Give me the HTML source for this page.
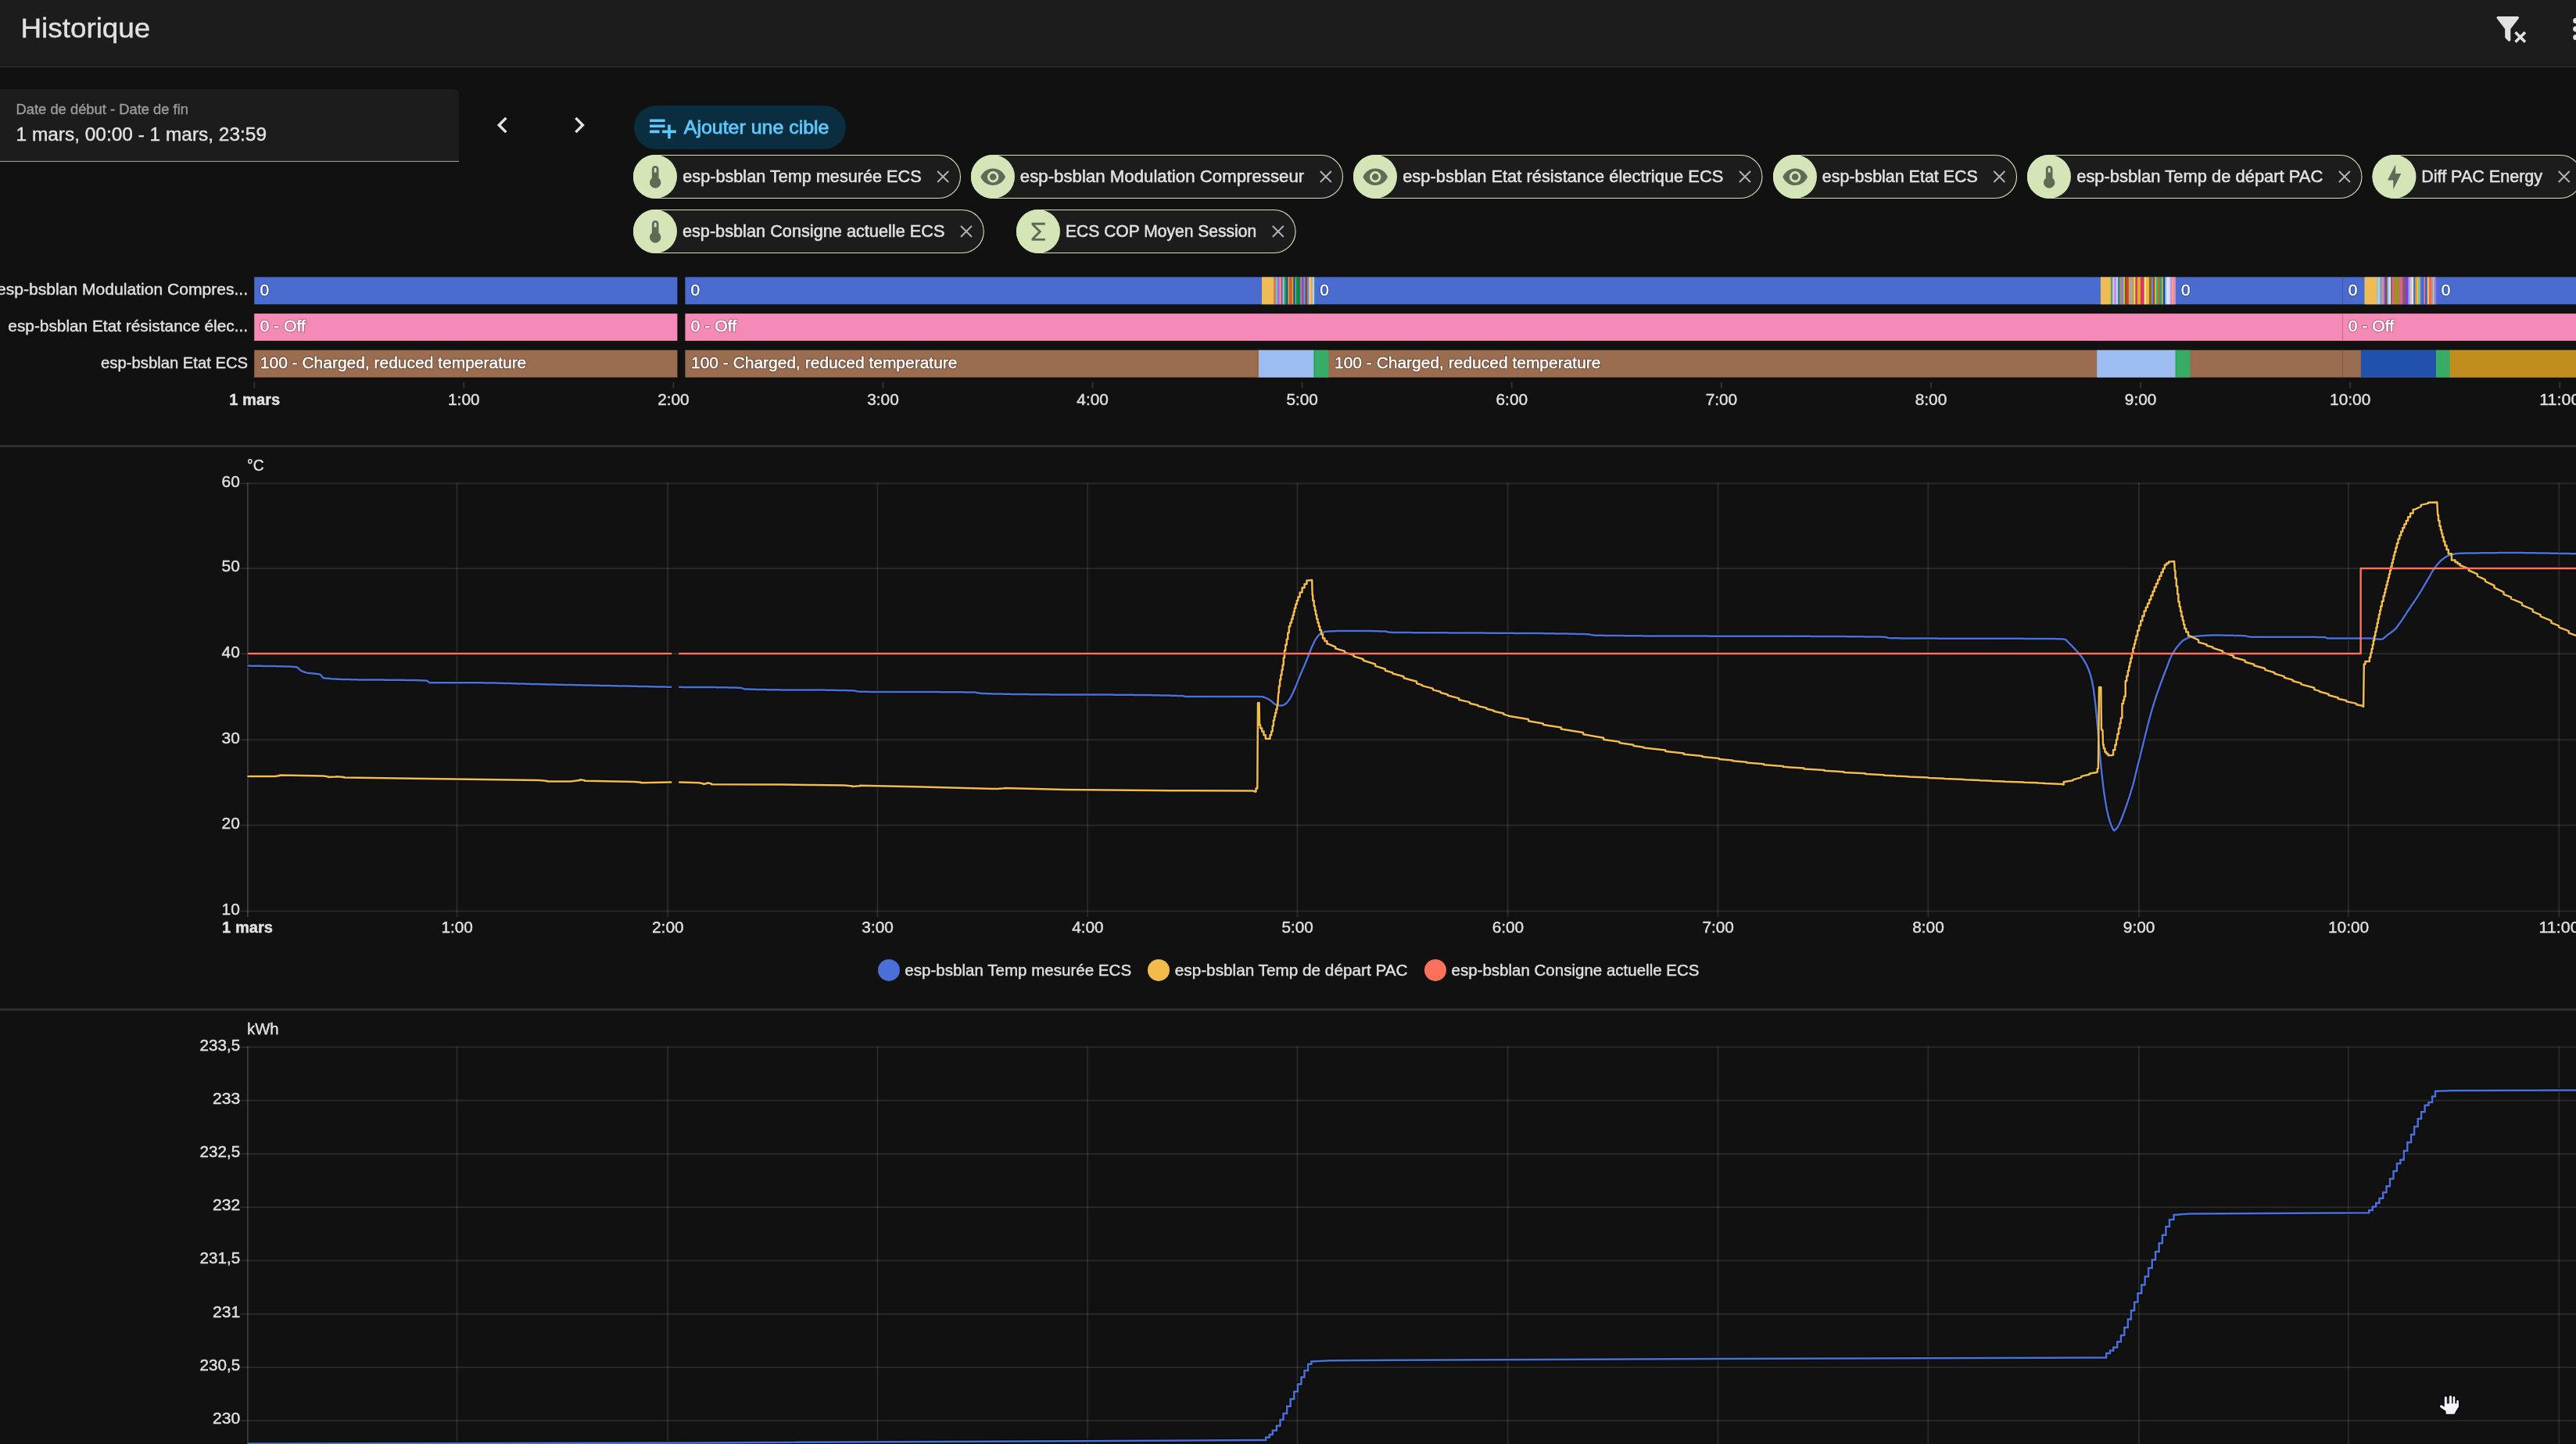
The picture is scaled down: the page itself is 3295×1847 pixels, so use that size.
<!DOCTYPE html>
<html lang="fr"><head><meta charset="utf-8"><title>Historique</title>
<style>
html,body{margin:0;padding:0;background:#111111;overflow:hidden;}
body{width:3295px;height:1847px;overflow:hidden;position:relative;font-family:"Liberation Sans", sans-serif;}
svg{position:absolute;left:0;top:0;display:block;will-change:transform}
text{font-family:"Liberation Sans", sans-serif;}
</style></head><body>
<svg width="3295" height="1847" viewBox="0 0 3295 1847">
<rect x="0" y="0" width="3295" height="85.5" fill="#1c1c1c"/>
<rect x="0" y="84.8" width="3295" height="1.4" fill="#303030"/>
<text x="26.4" y="48.0" font-size="34.7" fill="#e1e1e1" text-anchor="start" font-weight="normal" textLength="166.0" lengthAdjust="spacingAndGlyphs" stroke="#e1e1e1" stroke-width="0.4">Historique</text>
<path transform="translate(3190.00,15.60) scale(1.775)" d="M14.76,20.83L17.6,18L14.76,15.17L16.17,13.76L19,16.57L21.83,13.76L23.24,15.17L20.43,18L23.24,20.83L21.83,22.24L19,19.4L16.17,22.24L14.76,20.83M12,12V19.88C12.04,20.18 11.94,20.5 11.71,20.71C11.32,21.1 10.69,21.1 10.3,20.71L8.29,18.7C8.06,18.47 7.96,18.16 8,17.87V12H7.97L2.21,4.62C1.87,4.19 1.95,3.56 2.38,3.22C2.57,3.08 2.78,3 3,3V3H17V3C17.22,3 17.43,3.08 17.62,3.22C18.05,3.56 18.13,4.19 17.79,4.62L12.03,12H12Z" fill="#e1e1e1"/>
<path transform="translate(3273.40,15.80) scale(1.775)" d="M12,16A2,2 0 0,1 14,18A2,2 0 0,1 12,20A2,2 0 0,1 10,18A2,2 0 0,1 12,16M12,10A2,2 0 0,1 14,12A2,2 0 0,1 12,14A2,2 0 0,1 10,12A2,2 0 0,1 12,10M12,4A2,2 0 0,1 14,6A2,2 0 0,1 12,8A2,2 0 0,1 10,6A2,2 0 0,1 12,4Z" fill="#e1e1e1"/>
<path d="M0 114 H580 Q587 114 587 121 V206 H0 Z" fill="#1c1c1c"/>
<rect x="0" y="205.9" width="587" height="1.1" fill="#9a9a9a"/>
<text x="20.5" y="145.5" font-size="18.4" fill="#9b9b9b" text-anchor="start" font-weight="normal" textLength="220.5" lengthAdjust="spacingAndGlyphs" stroke="#9b9b9b" stroke-width="0.4">Date de début - Date de fin</text>
<text x="20.5" y="179.5" font-size="23.7" fill="#e1e1e1" text-anchor="start" font-weight="normal" textLength="320.5" lengthAdjust="spacingAndGlyphs" stroke="#e1e1e1" stroke-width="0.4">1 mars, 00:00 - 1 mars, 23:59</text>
<path transform="translate(622.08,139.36) scale(1.72)" d="M15.41,16.58L10.83,12L15.41,7.41L14,6L8,12L14,18L15.41,16.58Z" fill="#e1e1e1"/>
<path transform="translate(720.34,139.36) scale(1.72)" d="M8.59,16.58L13.17,12L8.59,7.41L10,6L16,12L10,18L8.59,16.58Z" fill="#e1e1e1"/>
<rect x="811" y="135" width="271" height="56" rx="28" fill="#0b2d40"/>
<path transform="translate(825.70,141.70) scale(1.78)" d="M3 16H10V14H3M18 14V10H16V14H12V16H16V20H18V16H22V14M14 6H3V8H14M14 10H3V12H14V10Z" fill="#5cc8fb"/>
<text x="874.8" y="171.3" font-size="23.8" fill="#5cc8fb" text-anchor="start" font-weight="normal" textLength="185.7" lengthAdjust="spacingAndGlyphs" stroke="#5cc8fb" stroke-width="0.8">Ajouter une cible</text>
<rect x="810.5" y="198.5" width="418.0" height="55" rx="27.5" fill="#1c1c1c" stroke="#d4e5b8" stroke-width="1.1"/>
<circle cx="838.0" cy="226.0" r="28" fill="#d4e5b8"/>
<path transform="translate(820.92,209.02) scale(1.44)" d="M15 13V5A3 3 0 0 0 9 5V13A5 5 0 1 0 15 13M12 4A1 1 0 0 1 13 5V8H11V5A1 1 0 0 1 12 4Z" fill="#5f6b55"/>
<text x="873.3" y="232.6" font-size="21.2" fill="#e1e1e1" text-anchor="start" font-weight="normal" textLength="305.3" lengthAdjust="spacingAndGlyphs" stroke="#e1e1e1" stroke-width="0.5">esp-bsblan Temp mesurée ECS</text>
<path d="M1199.2 219.0 L1213.2 233.0 M1213.2 219.0 L1199.2 233.0" stroke="#b4b4b4" stroke-width="1.9" fill="none"/>
<rect x="1242.5" y="198.5" width="475.0" height="55" rx="27.5" fill="#1c1c1c" stroke="#d4e5b8" stroke-width="1.1"/>
<circle cx="1270.0" cy="226.0" r="28" fill="#d4e5b8"/>
<path transform="translate(1252.92,209.02) scale(1.44)" d="M12,9A3,3 0 0,0 9,12A3,3 0 0,0 12,15A3,3 0 0,0 15,12A3,3 0 0,0 12,9M12,17A5,5 0 0,1 7,12A5,5 0 0,1 12,7A5,5 0 0,1 17,12A5,5 0 0,1 12,17M12,4.5C7,4.5 2.73,7.61 1,12C2.73,16.39 7,19.5 12,19.5C17,19.5 21.27,16.39 23,12C21.27,7.61 17,4.5 12,4.5Z" fill="#5f6b55"/>
<text x="1304.8" y="232.6" font-size="21.2" fill="#e1e1e1" text-anchor="start" font-weight="normal" textLength="363.4" lengthAdjust="spacingAndGlyphs" stroke="#e1e1e1" stroke-width="0.5">esp-bsblan Modulation Compresseur</text>
<path d="M1688.8 219.0 L1702.8 233.0 M1702.8 219.0 L1688.8 233.0" stroke="#b4b4b4" stroke-width="1.9" fill="none"/>
<rect x="1731.5" y="198.5" width="522.5" height="55" rx="27.5" fill="#1c1c1c" stroke="#d4e5b8" stroke-width="1.1"/>
<circle cx="1759.0" cy="226.0" r="28" fill="#d4e5b8"/>
<path transform="translate(1741.92,209.02) scale(1.44)" d="M12,9A3,3 0 0,0 9,12A3,3 0 0,0 12,15A3,3 0 0,0 15,12A3,3 0 0,0 12,9M12,17A5,5 0 0,1 7,12A5,5 0 0,1 12,7A5,5 0 0,1 17,12A5,5 0 0,1 12,17M12,4.5C7,4.5 2.73,7.61 1,12C2.73,16.39 7,19.5 12,19.5C17,19.5 21.27,16.39 23,12C21.27,7.61 17,4.5 12,4.5Z" fill="#5f6b55"/>
<text x="1794.2" y="232.6" font-size="21.2" fill="#e1e1e1" text-anchor="start" font-weight="normal" textLength="410.2" lengthAdjust="spacingAndGlyphs" stroke="#e1e1e1" stroke-width="0.5">esp-bsblan Etat résistance électrique ECS</text>
<path d="M2225.0 219.0 L2239.0 233.0 M2239.0 219.0 L2225.0 233.0" stroke="#b4b4b4" stroke-width="1.9" fill="none"/>
<rect x="2268.5" y="198.5" width="311.0" height="55" rx="27.5" fill="#1c1c1c" stroke="#d4e5b8" stroke-width="1.1"/>
<circle cx="2296.0" cy="226.0" r="28" fill="#d4e5b8"/>
<path transform="translate(2278.92,209.02) scale(1.44)" d="M12,9A3,3 0 0,0 9,12A3,3 0 0,0 12,15A3,3 0 0,0 15,12A3,3 0 0,0 12,9M12,17A5,5 0 0,1 7,12A5,5 0 0,1 12,7A5,5 0 0,1 17,12A5,5 0 0,1 12,17M12,4.5C7,4.5 2.73,7.61 1,12C2.73,16.39 7,19.5 12,19.5C17,19.5 21.27,16.39 23,12C21.27,7.61 17,4.5 12,4.5Z" fill="#5f6b55"/>
<text x="2330.8" y="232.6" font-size="21.2" fill="#e1e1e1" text-anchor="start" font-weight="normal" textLength="199.0" lengthAdjust="spacingAndGlyphs" stroke="#e1e1e1" stroke-width="0.5">esp-bsblan Etat ECS</text>
<path d="M2550.4 219.0 L2564.4 233.0 M2564.4 219.0 L2550.4 233.0" stroke="#b4b4b4" stroke-width="1.9" fill="none"/>
<rect x="2593.5" y="198.5" width="427.5" height="55" rx="27.5" fill="#1c1c1c" stroke="#d4e5b8" stroke-width="1.1"/>
<circle cx="2621.0" cy="226.0" r="28" fill="#d4e5b8"/>
<path transform="translate(2603.92,209.02) scale(1.44)" d="M15 13V5A3 3 0 0 0 9 5V13A5 5 0 1 0 15 13M12 4A1 1 0 0 1 13 5V8H11V5A1 1 0 0 1 12 4Z" fill="#5f6b55"/>
<text x="2656.2" y="232.6" font-size="21.2" fill="#e1e1e1" text-anchor="start" font-weight="normal" textLength="315.1" lengthAdjust="spacingAndGlyphs" stroke="#e1e1e1" stroke-width="0.5">esp-bsblan Temp de départ PAC</text>
<path d="M2991.9 219.0 L3005.9 233.0 M3005.9 219.0 L2991.9 233.0" stroke="#b4b4b4" stroke-width="1.9" fill="none"/>
<rect x="3035.0" y="198.5" width="267.5" height="55" rx="27.5" fill="#1c1c1c" stroke="#d4e5b8" stroke-width="1.1"/>
<circle cx="3062.5" cy="226.0" r="28" fill="#d4e5b8"/>
<path transform="translate(3045.42,209.02) scale(1.44)" d="M11 15H6L13 1V9H18L11 23V15Z" fill="#5f6b55"/>
<text x="3097.2" y="232.6" font-size="21.2" fill="#e1e1e1" text-anchor="start" font-weight="normal" textLength="154.9" lengthAdjust="spacingAndGlyphs" stroke="#e1e1e1" stroke-width="0.5">Diff PAC Energy</text>
<path d="M3272.7 219.0 L3286.7 233.0 M3286.7 219.0 L3272.7 233.0" stroke="#b4b4b4" stroke-width="1.9" fill="none"/>
<rect x="810.5" y="268.5" width="447.8" height="55" rx="27.5" fill="#1c1c1c" stroke="#d4e5b8" stroke-width="1.1"/>
<circle cx="838.0" cy="296.0" r="28" fill="#d4e5b8"/>
<path transform="translate(820.92,279.02) scale(1.44)" d="M15 13V5A3 3 0 0 0 9 5V13A5 5 0 1 0 15 13M12 4A1 1 0 0 1 13 5V8H11V5A1 1 0 0 1 12 4Z" fill="#5f6b55"/>
<text x="872.9" y="302.6" font-size="21.2" fill="#e1e1e1" text-anchor="start" font-weight="normal" textLength="335.5" lengthAdjust="spacingAndGlyphs" stroke="#e1e1e1" stroke-width="0.5">esp-bsblan Consigne actuelle ECS</text>
<path d="M1229.0 289.0 L1243.0 303.0 M1243.0 289.0 L1229.0 303.0" stroke="#b4b4b4" stroke-width="1.9" fill="none"/>
<rect x="1300.5" y="268.5" width="356.6" height="55" rx="27.5" fill="#1c1c1c" stroke="#d4e5b8" stroke-width="1.1"/>
<circle cx="1328.0" cy="296.0" r="28" fill="#d4e5b8"/>
<path transform="translate(1310.92,279.02) scale(1.44)" d="M18,6H8.83L14.83,12L8.83,18H18V20H6V18L12,12L6,6V4H18V6Z" fill="#5f6b55"/>
<text x="1363.0" y="302.6" font-size="21.2" fill="#e1e1e1" text-anchor="start" font-weight="normal" textLength="244.2" lengthAdjust="spacingAndGlyphs" stroke="#e1e1e1" stroke-width="0.5">ECS COP Moyen Session</text>
<path d="M1627.8 289.0 L1641.8 303.0 M1641.8 289.0 L1627.8 303.0" stroke="#b4b4b4" stroke-width="1.9" fill="none"/>
<rect x="325.2" y="354.4" width="541.2" height="34.9" fill="#4a6cd0"/>
<rect x="876.4" y="354.4" width="2420.6" height="34.9" fill="#4a6cd0"/>
<rect x="325.2" y="401.1" width="541.2" height="34.8" fill="#f68ab6"/>
<rect x="876.4" y="401.1" width="2420.6" height="34.8" fill="#f68ab6"/>
<rect x="325.2" y="447.8" width="541.2" height="34.9" fill="#9a6c50"/>
<rect x="876.4" y="447.8" width="2420.6" height="34.9" fill="#9a6c50"/>
<rect x="1614.0" y="354.4" width="15.6" height="34.9" fill="#eebb55"/>
<rect x="1629.4" y="354.4" width="2.5" height="34.9" fill="#ec6858"/>
<rect x="1631.7" y="354.4" width="2.8" height="34.9" fill="#6cc5b0"/>
<rect x="1634.3" y="354.4" width="2.3" height="34.9" fill="#a463f2"/>
<rect x="1636.4" y="354.4" width="2.5" height="34.9" fill="#ff8ab7"/>
<rect x="1638.8" y="354.4" width="1.9" height="34.9" fill="#8c5a1e"/>
<rect x="1640.5" y="354.4" width="2.5" height="34.9" fill="#97bbf5"/>
<rect x="1642.8" y="354.4" width="2.9" height="34.9" fill="#1aa05a"/>
<rect x="1645.5" y="354.4" width="2.0" height="34.9" fill="#094bad"/>
<rect x="1647.3" y="354.4" width="2.3" height="34.9" fill="#e6a000"/>
<rect x="1649.4" y="354.4" width="3.0" height="34.9" fill="#d2503c"/>
<rect x="1652.3" y="354.4" width="2.4" height="34.9" fill="#e6a000"/>
<rect x="1654.5" y="354.4" width="2.2" height="34.9" fill="#094bad"/>
<rect x="1656.6" y="354.4" width="1.8" height="34.9" fill="#62b894"/>
<rect x="1658.2" y="354.4" width="5.0" height="34.9" fill="#0a8a3a"/>
<rect x="1663.1" y="354.4" width="2.6" height="34.9" fill="#d96895"/>
<rect x="1665.5" y="354.4" width="2.2" height="34.9" fill="#8043ce"/>
<rect x="1667.5" y="354.4" width="2.2" height="34.9" fill="#7599d1"/>
<rect x="1669.6" y="354.4" width="2.6" height="34.9" fill="#7a4c31"/>
<rect x="1672.0" y="354.4" width="2.5" height="34.9" fill="#6989f4"/>
<rect x="1674.3" y="354.4" width="2.6" height="34.9" fill="#ffd444"/>
<rect x="1676.7" y="354.4" width="2.5" height="34.9" fill="#ff957c"/>
<rect x="1679.0" y="354.4" width="2.2" height="34.9" fill="#8fe9d3"/>
<rect x="2686.9" y="354.4" width="13.2" height="34.9" fill="#eebb55"/>
<rect x="2699.9" y="354.4" width="2.4" height="34.9" fill="#2fb46e"/>
<rect x="2702.2" y="354.4" width="2.6" height="34.9" fill="#ffadda"/>
<rect x="2704.6" y="354.4" width="2.5" height="34.9" fill="#be89ff"/>
<rect x="2706.9" y="354.4" width="2.4" height="34.9" fill="#b6d7ff"/>
<rect x="2709.2" y="354.4" width="2.5" height="34.9" fill="#2d8a6e"/>
<rect x="2711.5" y="354.4" width="2.2" height="34.9" fill="#bf8b6d"/>
<rect x="2713.6" y="354.4" width="2.5" height="34.9" fill="#9678dc"/>
<rect x="2715.9" y="354.4" width="2.3" height="34.9" fill="#9ad22b"/>
<rect x="2718.1" y="354.4" width="2.7" height="34.9" fill="#c82d3c"/>
<rect x="2720.6" y="354.4" width="2.4" height="34.9" fill="#a0600a"/>
<rect x="2722.8" y="354.4" width="2.2" height="34.9" fill="#ff8c50"/>
<rect x="2724.8" y="354.4" width="2.4" height="34.9" fill="#7ab0f0"/>
<rect x="2727.1" y="354.4" width="2.5" height="34.9" fill="#e0a010"/>
<rect x="2729.4" y="354.4" width="2.2" height="34.9" fill="#e8e060"/>
<rect x="2731.5" y="354.4" width="2.6" height="34.9" fill="#e03060"/>
<rect x="2733.9" y="354.4" width="4.2" height="34.9" fill="#d8b020"/>
<rect x="2738.0" y="354.4" width="4.8" height="34.9" fill="#e0306e"/>
<rect x="2742.7" y="354.4" width="2.5" height="34.9" fill="#f0f060"/>
<rect x="2745.0" y="354.4" width="4.2" height="34.9" fill="#f0b050"/>
<rect x="2749.1" y="354.4" width="2.9" height="34.9" fill="#8a6a00"/>
<rect x="2751.8" y="354.4" width="2.2" height="34.9" fill="#6989f4"/>
<rect x="2753.9" y="354.4" width="2.4" height="34.9" fill="#c83028"/>
<rect x="2756.2" y="354.4" width="2.3" height="34.9" fill="#a0e030"/>
<rect x="2758.3" y="354.4" width="2.2" height="34.9" fill="#20c070"/>
<rect x="2760.4" y="354.4" width="2.4" height="34.9" fill="#e06010"/>
<rect x="2762.7" y="354.4" width="2.5" height="34.9" fill="#10a890"/>
<rect x="2765.0" y="354.4" width="2.2" height="34.9" fill="#e0a000"/>
<rect x="2767.1" y="354.4" width="2.6" height="34.9" fill="#094bad"/>
<rect x="2769.5" y="354.4" width="2.5" height="34.9" fill="#a8c8f8"/>
<rect x="2771.8" y="354.4" width="2.5" height="34.9" fill="#d8ecff"/>
<rect x="2774.2" y="354.4" width="2.2" height="34.9" fill="#ffd0e0"/>
<rect x="2776.2" y="354.4" width="2.0" height="34.9" fill="#c090f0"/>
<rect x="2778.0" y="354.4" width="2.6" height="34.9" fill="#ffa070"/>
<rect x="2780.4" y="354.4" width="2.4" height="34.9" fill="#f090c0"/>
<rect x="3024.5" y="354.4" width="15.8" height="34.9" fill="#eebb55"/>
<rect x="3040.1" y="354.4" width="2.0" height="34.9" fill="#7fd8d0"/>
<rect x="3041.9" y="354.4" width="2.9" height="34.9" fill="#d0b8e8"/>
<rect x="3044.7" y="354.4" width="2.3" height="34.9" fill="#50b8a0"/>
<rect x="3046.8" y="354.4" width="2.4" height="34.9" fill="#ff80a8"/>
<rect x="3049.1" y="354.4" width="2.2" height="34.9" fill="#8060f0"/>
<rect x="3051.2" y="354.4" width="2.6" height="34.9" fill="#805020"/>
<rect x="3053.6" y="354.4" width="2.2" height="34.9" fill="#90c0f8"/>
<rect x="3055.6" y="354.4" width="2.6" height="34.9" fill="#c8e8ff"/>
<rect x="3058.0" y="354.4" width="2.0" height="34.9" fill="#a06030"/>
<rect x="3059.8" y="354.4" width="2.4" height="34.9" fill="#e060a0"/>
<rect x="3062.1" y="354.4" width="7.2" height="34.9" fill="#a09020"/>
<rect x="3069.2" y="354.4" width="4.3" height="34.9" fill="#d86098"/>
<rect x="3073.3" y="354.4" width="2.8" height="34.9" fill="#906040"/>
<rect x="3075.9" y="354.4" width="4.7" height="34.9" fill="#8040d0"/>
<rect x="3080.4" y="354.4" width="2.2" height="34.9" fill="#80b0e8"/>
<rect x="3082.5" y="354.4" width="2.3" height="34.9" fill="#ffb0d0"/>
<rect x="3084.7" y="354.4" width="2.5" height="34.9" fill="#ffe0e0"/>
<rect x="3087.0" y="354.4" width="2.3" height="34.9" fill="#2080f0"/>
<rect x="3089.2" y="354.4" width="2.5" height="34.9" fill="#ff9000"/>
<rect x="3091.5" y="354.4" width="2.2" height="34.9" fill="#f0d030"/>
<rect x="3093.6" y="354.4" width="2.6" height="34.9" fill="#30d8e8"/>
<rect x="3096.0" y="354.4" width="2.2" height="34.9" fill="#d04090"/>
<rect x="3098.0" y="354.4" width="2.5" height="34.9" fill="#1878e0"/>
<rect x="3100.3" y="354.4" width="2.2" height="34.9" fill="#e870a0"/>
<rect x="3102.4" y="354.4" width="2.4" height="34.9" fill="#2060d0"/>
<rect x="3104.7" y="354.4" width="2.6" height="34.9" fill="#ffc840"/>
<rect x="3107.1" y="354.4" width="2.6" height="34.9" fill="#ff6050"/>
<rect x="3109.5" y="354.4" width="2.2" height="34.9" fill="#f08060"/>
<rect x="3111.5" y="354.4" width="2.5" height="34.9" fill="#80d8b0"/>
<rect x="3113.8" y="354.4" width="2.4" height="34.9" fill="#c060f8"/>
<rect x="1609.6" y="447.8" width="71.4" height="34.9" fill="#9cbcf2"/>
<rect x="1680.8" y="447.8" width="18.6" height="34.9" fill="#38ab66"/>
<rect x="2682.2" y="447.8" width="100.9" height="34.9" fill="#9cbcf2"/>
<rect x="2782.9" y="447.8" width="18.4" height="34.9" fill="#38ab66"/>
<rect x="3019.8" y="447.8" width="96.2" height="34.9" fill="#2150ad"/>
<rect x="3115.9" y="447.8" width="18.3" height="34.9" fill="#38ab66"/>
<rect x="3134.1" y="447.8" width="162.9" height="34.9" fill="#c18d1e"/>
<rect x="1607.9" y="447.8" width="1.7" height="34.9" fill="#a06432"/>
<rect x="1680.6" y="447.8" width="1.3" height="34.9" fill="#12a046"/>
<rect x="2782.7" y="447.8" width="1.3" height="34.9" fill="#12b030"/>
<rect x="3133.9" y="447.8" width="1.2" height="34.9" fill="#d88a10"/>
<rect x="2995.9" y="354.4" width="1.1" height="34.9" fill="#3d59a8"/>
<rect x="2995.9" y="401.1" width="1.1" height="34.8" fill="#c86e92"/>
<rect x="2995.9" y="447.8" width="1.1" height="34.9" fill="#7e5840"/>
<text x="332.4" y="377.7" font-size="20.9" fill="none" text-anchor="start" font-weight="normal" stroke="rgba(0,0,0,0.28)" stroke-width="2.6" stroke-linejoin="round">0</text>
<text x="332.4" y="377.7" font-size="20.9" fill="#ffffff" text-anchor="start" font-weight="normal" stroke="#ffffff" stroke-width="0.4">0</text>
<text x="883.6" y="377.7" font-size="20.9" fill="none" text-anchor="start" font-weight="normal" stroke="rgba(0,0,0,0.28)" stroke-width="2.6" stroke-linejoin="round">0</text>
<text x="883.6" y="377.7" font-size="20.9" fill="#ffffff" text-anchor="start" font-weight="normal" stroke="#ffffff" stroke-width="0.4">0</text>
<text x="1688.3" y="377.7" font-size="20.9" fill="none" text-anchor="start" font-weight="normal" stroke="rgba(0,0,0,0.28)" stroke-width="2.6" stroke-linejoin="round">0</text>
<text x="1688.3" y="377.7" font-size="20.9" fill="#ffffff" text-anchor="start" font-weight="normal" stroke="#ffffff" stroke-width="0.4">0</text>
<text x="2790.0" y="377.7" font-size="20.9" fill="none" text-anchor="start" font-weight="normal" stroke="rgba(0,0,0,0.28)" stroke-width="2.6" stroke-linejoin="round">0</text>
<text x="2790.0" y="377.7" font-size="20.9" fill="#ffffff" text-anchor="start" font-weight="normal" stroke="#ffffff" stroke-width="0.4">0</text>
<text x="3003.7" y="377.7" font-size="20.9" fill="none" text-anchor="start" font-weight="normal" stroke="rgba(0,0,0,0.28)" stroke-width="2.6" stroke-linejoin="round">0</text>
<text x="3003.7" y="377.7" font-size="20.9" fill="#ffffff" text-anchor="start" font-weight="normal" stroke="#ffffff" stroke-width="0.4">0</text>
<text x="3122.7" y="377.7" font-size="20.9" fill="none" text-anchor="start" font-weight="normal" stroke="rgba(0,0,0,0.28)" stroke-width="2.6" stroke-linejoin="round">0</text>
<text x="3122.7" y="377.7" font-size="20.9" fill="#ffffff" text-anchor="start" font-weight="normal" stroke="#ffffff" stroke-width="0.4">0</text>
<text x="332.4" y="424.4" font-size="20.9" fill="none" text-anchor="start" font-weight="normal" textLength="58.5" lengthAdjust="spacingAndGlyphs" stroke="rgba(0,0,0,0.28)" stroke-width="2.6" stroke-linejoin="round">0 - Off</text>
<text x="332.4" y="424.4" font-size="20.9" fill="#ffffff" text-anchor="start" font-weight="normal" textLength="58.5" lengthAdjust="spacingAndGlyphs" stroke="#ffffff" stroke-width="0.4">0 - Off</text>
<text x="883.6" y="424.4" font-size="20.9" fill="none" text-anchor="start" font-weight="normal" textLength="58.5" lengthAdjust="spacingAndGlyphs" stroke="rgba(0,0,0,0.28)" stroke-width="2.6" stroke-linejoin="round">0 - Off</text>
<text x="883.6" y="424.4" font-size="20.9" fill="#ffffff" text-anchor="start" font-weight="normal" textLength="58.5" lengthAdjust="spacingAndGlyphs" stroke="#ffffff" stroke-width="0.4">0 - Off</text>
<text x="3003.7" y="424.4" font-size="20.9" fill="none" text-anchor="start" font-weight="normal" textLength="58.5" lengthAdjust="spacingAndGlyphs" stroke="rgba(0,0,0,0.28)" stroke-width="2.6" stroke-linejoin="round">0 - Off</text>
<text x="3003.7" y="424.4" font-size="20.9" fill="#ffffff" text-anchor="start" font-weight="normal" textLength="58.5" lengthAdjust="spacingAndGlyphs" stroke="#ffffff" stroke-width="0.4">0 - Off</text>
<text x="332.8" y="471.1" font-size="20.9" fill="none" text-anchor="start" font-weight="normal" textLength="340.5" lengthAdjust="spacingAndGlyphs" stroke="rgba(0,0,0,0.28)" stroke-width="2.6" stroke-linejoin="round">100 - Charged, reduced temperature</text>
<text x="332.8" y="471.1" font-size="20.9" fill="#ffffff" text-anchor="start" font-weight="normal" textLength="340.5" lengthAdjust="spacingAndGlyphs" stroke="#ffffff" stroke-width="0.4">100 - Charged, reduced temperature</text>
<text x="884.0" y="471.1" font-size="20.9" fill="none" text-anchor="start" font-weight="normal" textLength="340.5" lengthAdjust="spacingAndGlyphs" stroke="rgba(0,0,0,0.28)" stroke-width="2.6" stroke-linejoin="round">100 - Charged, reduced temperature</text>
<text x="884.0" y="471.1" font-size="20.9" fill="#ffffff" text-anchor="start" font-weight="normal" textLength="340.5" lengthAdjust="spacingAndGlyphs" stroke="#ffffff" stroke-width="0.4">100 - Charged, reduced temperature</text>
<text x="1707.0" y="471.1" font-size="20.9" fill="none" text-anchor="start" font-weight="normal" textLength="340.5" lengthAdjust="spacingAndGlyphs" stroke="rgba(0,0,0,0.28)" stroke-width="2.6" stroke-linejoin="round">100 - Charged, reduced temperature</text>
<text x="1707.0" y="471.1" font-size="20.9" fill="#ffffff" text-anchor="start" font-weight="normal" textLength="340.5" lengthAdjust="spacingAndGlyphs" stroke="#ffffff" stroke-width="0.4">100 - Charged, reduced temperature</text>
<text x="-4.0" y="377.1" font-size="21.0" fill="#e1e1e1" text-anchor="start" font-weight="normal" textLength="321.1" lengthAdjust="spacingAndGlyphs" stroke="#e1e1e1" stroke-width="0.4">esp-bsblan Modulation Compres...</text>
<text x="10.3" y="423.8" font-size="21.0" fill="#e1e1e1" text-anchor="start" font-weight="normal" textLength="306.8" lengthAdjust="spacingAndGlyphs" stroke="#e1e1e1" stroke-width="0.4">esp-bsblan Etat résistance élec...</text>
<text x="129.1" y="470.5" font-size="21.0" fill="#e1e1e1" text-anchor="start" font-weight="normal" textLength="188.0" lengthAdjust="spacingAndGlyphs" stroke="#e1e1e1" stroke-width="0.4">esp-bsblan Etat ECS</text>
<rect x="324.3" y="488.6" width="1.8" height="8" fill="#333333"/>
<text x="325.8" y="517.8" font-size="20.9" fill="#e1e1e1" text-anchor="middle" font-weight="bold" textLength="65.0" lengthAdjust="spacingAndGlyphs" stroke="#e1e1e1" stroke-width="0.4">1 mars</text>
<rect x="592.4" y="488.6" width="1.8" height="8" fill="#333333"/>
<text x="593.3" y="517.8" font-size="21.0" fill="#e1e1e1" text-anchor="middle" font-weight="normal" textLength="40.5" lengthAdjust="spacingAndGlyphs" stroke="#e1e1e1" stroke-width="0.4">1:00</text>
<rect x="860.5" y="488.6" width="1.8" height="8" fill="#333333"/>
<text x="861.4" y="517.8" font-size="21.0" fill="#e1e1e1" text-anchor="middle" font-weight="normal" textLength="40.5" lengthAdjust="spacingAndGlyphs" stroke="#e1e1e1" stroke-width="0.4">2:00</text>
<rect x="1128.6" y="488.6" width="1.8" height="8" fill="#333333"/>
<text x="1129.5" y="517.8" font-size="21.0" fill="#e1e1e1" text-anchor="middle" font-weight="normal" textLength="40.5" lengthAdjust="spacingAndGlyphs" stroke="#e1e1e1" stroke-width="0.4">3:00</text>
<rect x="1396.7" y="488.6" width="1.8" height="8" fill="#333333"/>
<text x="1397.6" y="517.8" font-size="21.0" fill="#e1e1e1" text-anchor="middle" font-weight="normal" textLength="40.5" lengthAdjust="spacingAndGlyphs" stroke="#e1e1e1" stroke-width="0.4">4:00</text>
<rect x="1664.8" y="488.6" width="1.8" height="8" fill="#333333"/>
<text x="1665.7" y="517.8" font-size="21.0" fill="#e1e1e1" text-anchor="middle" font-weight="normal" textLength="40.5" lengthAdjust="spacingAndGlyphs" stroke="#e1e1e1" stroke-width="0.4">5:00</text>
<rect x="1932.9" y="488.6" width="1.8" height="8" fill="#333333"/>
<text x="1933.8" y="517.8" font-size="21.0" fill="#e1e1e1" text-anchor="middle" font-weight="normal" textLength="40.5" lengthAdjust="spacingAndGlyphs" stroke="#e1e1e1" stroke-width="0.4">6:00</text>
<rect x="2201.0" y="488.6" width="1.8" height="8" fill="#333333"/>
<text x="2201.9" y="517.8" font-size="21.0" fill="#e1e1e1" text-anchor="middle" font-weight="normal" textLength="40.5" lengthAdjust="spacingAndGlyphs" stroke="#e1e1e1" stroke-width="0.4">7:00</text>
<rect x="2469.1" y="488.6" width="1.8" height="8" fill="#333333"/>
<text x="2470.0" y="517.8" font-size="21.0" fill="#e1e1e1" text-anchor="middle" font-weight="normal" textLength="40.5" lengthAdjust="spacingAndGlyphs" stroke="#e1e1e1" stroke-width="0.4">8:00</text>
<rect x="2737.2" y="488.6" width="1.8" height="8" fill="#333333"/>
<text x="2738.1" y="517.8" font-size="21.0" fill="#e1e1e1" text-anchor="middle" font-weight="normal" textLength="40.5" lengthAdjust="spacingAndGlyphs" stroke="#e1e1e1" stroke-width="0.4">9:00</text>
<rect x="3005.3" y="488.6" width="1.8" height="8" fill="#333333"/>
<text x="3006.2" y="517.8" font-size="21.0" fill="#e1e1e1" text-anchor="middle" font-weight="normal" textLength="52.2" lengthAdjust="spacingAndGlyphs" stroke="#e1e1e1" stroke-width="0.4">10:00</text>
<rect x="3273.4" y="488.6" width="1.8" height="8" fill="#333333"/>
<text x="3274.3" y="517.8" font-size="21.0" fill="#e1e1e1" text-anchor="middle" font-weight="normal" textLength="52.2" lengthAdjust="spacingAndGlyphs" stroke="#e1e1e1" stroke-width="0.4">11:00</text>
<rect x="0" y="569.0" width="3295" height="3.0" fill="#303030"/>
<rect x="0" y="1289.8" width="3295" height="3.0" fill="#303030"/>
<rect x="307.5" y="617.5" width="2987.5" height="1.8" fill="rgba(255,255,255,0.105)"/>
<text x="306.9" y="622.8" font-size="21.0" fill="#e1e1e1" text-anchor="end" font-weight="normal" textLength="23.3" lengthAdjust="spacingAndGlyphs" stroke="#e1e1e1" stroke-width="0.4">60</text>
<rect x="307.5" y="726.1" width="2987.5" height="1.8" fill="rgba(255,255,255,0.105)"/>
<text x="306.9" y="731.4" font-size="21.0" fill="#e1e1e1" text-anchor="end" font-weight="normal" textLength="23.3" lengthAdjust="spacingAndGlyphs" stroke="#e1e1e1" stroke-width="0.4">50</text>
<rect x="307.5" y="835.2" width="2987.5" height="1.8" fill="rgba(255,255,255,0.105)"/>
<text x="306.9" y="840.5" font-size="21.0" fill="#e1e1e1" text-anchor="end" font-weight="normal" textLength="23.3" lengthAdjust="spacingAndGlyphs" stroke="#e1e1e1" stroke-width="0.4">40</text>
<rect x="307.5" y="945.4" width="2987.5" height="1.8" fill="rgba(255,255,255,0.105)"/>
<text x="306.9" y="950.7" font-size="21.0" fill="#e1e1e1" text-anchor="end" font-weight="normal" textLength="23.3" lengthAdjust="spacingAndGlyphs" stroke="#e1e1e1" stroke-width="0.4">30</text>
<rect x="307.5" y="1054.7" width="2987.5" height="1.8" fill="rgba(255,255,255,0.105)"/>
<text x="306.9" y="1060.0" font-size="21.0" fill="#e1e1e1" text-anchor="end" font-weight="normal" textLength="23.3" lengthAdjust="spacingAndGlyphs" stroke="#e1e1e1" stroke-width="0.4">20</text>
<rect x="307.5" y="1164.5" width="2987.5" height="1.8" fill="rgba(255,255,255,0.105)"/>
<text x="306.9" y="1169.8" font-size="21.0" fill="#e1e1e1" text-anchor="end" font-weight="normal" textLength="23.3" lengthAdjust="spacingAndGlyphs" stroke="#e1e1e1" stroke-width="0.4">10</text>
<rect x="316.0" y="617.5" width="1.8" height="555.5" fill="rgba(255,255,255,0.175)"/>
<text x="316.6" y="1193.4" font-size="20.9" fill="#e1e1e1" text-anchor="middle" font-weight="bold" textLength="65.0" lengthAdjust="spacingAndGlyphs" stroke="#e1e1e1" stroke-width="0.4">1 mars</text>
<rect x="583.6" y="617.5" width="1.8" height="555.5" fill="rgba(255,255,255,0.105)"/>
<text x="584.7" y="1193.4" font-size="21.0" fill="#e1e1e1" text-anchor="middle" font-weight="normal" textLength="40.5" lengthAdjust="spacingAndGlyphs" stroke="#e1e1e1" stroke-width="0.4">1:00</text>
<rect x="853.2" y="617.5" width="1.8" height="555.5" fill="rgba(255,255,255,0.105)"/>
<text x="854.3" y="1193.4" font-size="21.0" fill="#e1e1e1" text-anchor="middle" font-weight="normal" textLength="40.5" lengthAdjust="spacingAndGlyphs" stroke="#e1e1e1" stroke-width="0.4">2:00</text>
<rect x="1121.5" y="617.5" width="1.8" height="555.5" fill="rgba(255,255,255,0.105)"/>
<text x="1122.6" y="1193.4" font-size="21.0" fill="#e1e1e1" text-anchor="middle" font-weight="normal" textLength="40.5" lengthAdjust="spacingAndGlyphs" stroke="#e1e1e1" stroke-width="0.4">3:00</text>
<rect x="1390.3" y="617.5" width="1.8" height="555.5" fill="rgba(255,255,255,0.105)"/>
<text x="1391.4" y="1193.4" font-size="21.0" fill="#e1e1e1" text-anchor="middle" font-weight="normal" textLength="40.5" lengthAdjust="spacingAndGlyphs" stroke="#e1e1e1" stroke-width="0.4">4:00</text>
<rect x="1658.6" y="617.5" width="1.8" height="555.5" fill="rgba(255,255,255,0.105)"/>
<text x="1659.7" y="1193.4" font-size="21.0" fill="#e1e1e1" text-anchor="middle" font-weight="normal" textLength="40.5" lengthAdjust="spacingAndGlyphs" stroke="#e1e1e1" stroke-width="0.4">5:00</text>
<rect x="1927.8" y="617.5" width="1.8" height="555.5" fill="rgba(255,255,255,0.105)"/>
<text x="1928.9" y="1193.4" font-size="21.0" fill="#e1e1e1" text-anchor="middle" font-weight="normal" textLength="40.5" lengthAdjust="spacingAndGlyphs" stroke="#e1e1e1" stroke-width="0.4">6:00</text>
<rect x="2196.6" y="617.5" width="1.8" height="555.5" fill="rgba(255,255,255,0.105)"/>
<text x="2197.7" y="1193.4" font-size="21.0" fill="#e1e1e1" text-anchor="middle" font-weight="normal" textLength="40.5" lengthAdjust="spacingAndGlyphs" stroke="#e1e1e1" stroke-width="0.4">7:00</text>
<rect x="2465.4" y="617.5" width="1.8" height="555.5" fill="rgba(255,255,255,0.105)"/>
<text x="2466.5" y="1193.4" font-size="21.0" fill="#e1e1e1" text-anchor="middle" font-weight="normal" textLength="40.5" lengthAdjust="spacingAndGlyphs" stroke="#e1e1e1" stroke-width="0.4">8:00</text>
<rect x="2735.0" y="617.5" width="1.8" height="555.5" fill="rgba(255,255,255,0.105)"/>
<text x="2736.1" y="1193.4" font-size="21.0" fill="#e1e1e1" text-anchor="middle" font-weight="normal" textLength="40.5" lengthAdjust="spacingAndGlyphs" stroke="#e1e1e1" stroke-width="0.4">9:00</text>
<rect x="3003.0" y="617.5" width="1.8" height="555.5" fill="rgba(255,255,255,0.105)"/>
<text x="3004.1" y="1193.4" font-size="21.0" fill="#e1e1e1" text-anchor="middle" font-weight="normal" textLength="52.2" lengthAdjust="spacingAndGlyphs" stroke="#e1e1e1" stroke-width="0.4">10:00</text>
<rect x="3272.4" y="617.5" width="1.8" height="555.5" fill="rgba(255,255,255,0.105)"/>
<text x="3273.5" y="1193.4" font-size="21.0" fill="#e1e1e1" text-anchor="middle" font-weight="normal" textLength="52.2" lengthAdjust="spacingAndGlyphs" stroke="#e1e1e1" stroke-width="0.4">11:00</text>
<text x="316.0" y="601.6" font-size="21.0" fill="#e1e1e1" text-anchor="start" font-weight="normal" textLength="21.6" lengthAdjust="spacingAndGlyphs" stroke="#e1e1e1" stroke-width="0.4">°C</text>
<path d="M316.3 851.6 L317.8 851.6 L319.3 851.6 L320.8 851.7 L322.3 851.7 L323.8 851.7 L325.3 851.7 L326.8 851.8 L328.4 851.8 L329.9 851.8 L331.4 851.8 L332.9 851.8 L334.4 851.8 L335.9 851.9 L337.4 851.9 L338.9 851.9 L340.4 851.9 L341.9 852.0 L343.4 852.0 L344.9 852.0 L346.4 852.0 L347.9 852.0 L349.5 852.1 L351.0 852.1 L352.5 852.1 L354.0 852.2 L355.5 852.2 L357.0 852.2 L358.5 852.3 L360.0 852.3 L361.6 852.3 L363.2 852.4 L364.8 852.4 L366.4 852.5 L368.0 852.5 L369.6 852.6 L371.3 852.6 L372.9 852.7 L374.5 852.8 L376.1 852.9 L377.7 853.0 L379.3 853.2 L381.0 854.1 L382.7 855.9 L384.4 857.3 L385.9 858.1 L387.5 858.8 L389.0 859.5 L390.6 860.0 L392.1 860.4 L393.7 860.7 L395.4 860.9 L397.0 861.1 L398.6 861.3 L400.2 861.4 L401.9 861.5 L403.5 861.7 L405.1 861.9 L406.7 862.1 L408.4 862.5 L410.0 862.9 L411.6 865.0 L413.1 867.0 L414.7 867.2 L416.2 867.5 L417.8 867.7 L419.3 867.8 L420.9 868.0 L422.5 868.1 L424.0 868.3 L425.6 868.4 L427.2 868.5 L428.7 868.6 L430.3 868.6 L431.8 868.7 L433.4 868.8 L435.0 868.8 L436.5 868.9 L438.1 868.9 L439.7 868.9 L441.2 869.0 L442.8 869.0 L444.3 869.1 L445.9 869.1 L447.4 869.1 L448.9 869.2 L450.4 869.2 L452.0 869.2 L453.5 869.3 L455.0 869.3 L456.5 869.3 L458.0 869.4 L459.5 869.4 L461.1 869.4 L462.6 869.4 L464.1 869.4 L465.6 869.5 L467.1 869.5 L468.6 869.5 L470.1 869.5 L471.7 869.5 L473.2 869.5 L474.7 869.6 L476.2 869.6 L477.7 869.6 L479.2 869.6 L480.7 869.6 L482.3 869.6 L483.8 869.6 L485.3 869.6 L486.8 869.6 L488.3 869.6 L489.8 869.6 L491.4 869.6 L492.9 869.7 L494.4 869.7 L495.9 869.7 L497.4 869.7 L498.9 869.7 L500.4 869.7 L502.0 869.7 L503.5 869.7 L505.0 869.7 L506.5 869.7 L508.0 869.7 L509.5 869.8 L511.1 869.8 L512.6 869.8 L514.1 869.8 L515.6 869.8 L517.1 869.8 L518.6 869.9 L520.1 869.9 L521.7 869.9 L523.2 869.9 L524.7 870.0 L526.2 870.0 L527.7 870.0 L529.2 870.1 L530.7 870.1 L532.3 870.1 L533.8 870.2 L535.3 870.2 L536.8 870.3 L538.3 870.3 L539.8 870.4 L541.4 870.4 L542.9 870.5 L544.4 870.5 L545.9 870.6 L547.7 871.9 L549.5 873.2 L551.0 873.2 L552.5 873.2 L554.1 873.2 L555.6 873.2 L557.1 873.2 L558.6 873.2 L560.1 873.2 L561.7 873.2 L563.2 873.2 L564.7 873.2 L566.2 873.2 L567.8 873.2 L569.3 873.2 L570.8 873.2 L572.3 873.2 L573.8 873.2 L575.4 873.2 L576.9 873.2 L578.4 873.2 L579.9 873.2 L581.4 873.2 L583.0 873.2 L584.5 873.2 L586.0 873.2 L587.5 873.2 L589.1 873.2 L590.6 873.2 L592.1 873.2 L593.6 873.2 L595.1 873.2 L596.7 873.2 L598.2 873.2 L599.7 873.2 L601.2 873.2 L602.7 873.2 L604.3 873.2 L605.8 873.2 L607.3 873.2 L608.8 873.2 L610.3 873.2 L611.9 873.3 L613.4 873.3 L614.9 873.3 L616.4 873.3 L617.9 873.3 L619.5 873.4 L621.0 873.4 L622.5 873.4 L624.0 873.4 L625.5 873.5 L627.1 873.5 L628.6 873.5 L630.1 873.5 L631.6 873.6 L633.1 873.6 L634.7 873.6 L636.2 873.7 L637.7 873.7 L639.2 873.8 L640.7 873.8 L642.3 873.8 L643.8 873.9 L645.3 873.9 L646.8 873.9 L648.3 874.0 L649.9 874.0 L651.4 874.1 L652.9 874.1 L654.4 874.2 L655.9 874.2 L657.4 874.2 L659.0 874.3 L660.5 874.3 L662.0 874.4 L663.5 874.4 L665.0 874.5 L666.6 874.5 L668.1 874.6 L669.6 874.6 L671.1 874.6 L672.6 874.7 L674.2 874.7 L675.7 874.8 L677.2 874.8 L678.7 874.9 L680.2 874.9 L681.8 874.9 L683.3 875.0 L684.8 875.0 L686.3 875.1 L687.8 875.1 L689.4 875.1 L690.9 875.2 L692.4 875.2 L693.9 875.3 L695.4 875.3 L697.0 875.3 L698.5 875.4 L700.0 875.4 L701.5 875.4 L703.0 875.5 L704.5 875.5 L706.0 875.5 L707.5 875.6 L709.0 875.6 L710.5 875.6 L712.0 875.7 L713.5 875.7 L715.0 875.7 L716.5 875.8 L718.0 875.8 L719.5 875.8 L721.0 875.9 L722.5 875.9 L724.0 875.9 L725.5 876.0 L727.0 876.0 L728.5 876.0 L730.0 876.0 L731.5 876.1 L733.0 876.1 L734.5 876.1 L736.0 876.2 L737.5 876.2 L739.0 876.2 L740.6 876.3 L742.1 876.3 L743.6 876.3 L745.1 876.4 L746.6 876.4 L748.1 876.4 L749.6 876.5 L751.1 876.5 L752.6 876.5 L754.1 876.6 L755.6 876.6 L757.1 876.6 L758.6 876.7 L760.1 876.7 L761.6 876.7 L763.1 876.8 L764.6 876.8 L766.1 876.8 L767.6 876.9 L769.1 876.9 L770.6 876.9 L772.1 876.9 L773.6 877.0 L775.1 877.0 L776.6 877.0 L778.1 877.1 L779.6 877.1 L781.1 877.1 L782.6 877.2 L784.1 877.2 L785.6 877.2 L787.1 877.3 L788.6 877.3 L790.1 877.3 L791.6 877.4 L793.1 877.4 L794.6 877.4 L796.1 877.5 L797.6 877.5 L799.1 877.5 L800.6 877.6 L802.1 877.6 L803.6 877.6 L805.1 877.6 L806.6 877.7 L808.1 877.7 L809.6 877.7 L811.1 877.8 L812.6 877.8 L814.1 877.8 L815.6 877.9 L817.1 877.9 L818.6 877.9 L820.2 878.0 L821.7 878.0 L823.2 878.0 L824.7 878.1 L826.2 878.1 L827.7 878.1 L829.2 878.2 L830.7 878.2 L832.2 878.2 L833.7 878.3 L835.2 878.3 L836.7 878.3 L838.2 878.4 L839.7 878.4 L841.2 878.4 L842.7 878.4 L844.2 878.5 L845.7 878.5 L847.2 878.5 L848.7 878.6 L850.2 878.6 L851.7 878.6 L853.2 878.7 L854.7 878.7 L856.2 878.7 L857.7 878.8 L859.2 878.8" stroke="#06090b" stroke-width="4.7" fill="none" stroke-linejoin="round"/>
<path d="M868.2 878.8 L869.7 878.8 L871.2 878.8 L872.7 878.9 L874.2 878.9 L875.7 878.9 L877.3 878.9 L878.8 878.9 L880.3 878.9 L881.8 878.9 L883.3 878.9 L884.8 878.9 L886.3 879.0 L887.8 879.0 L889.3 879.0 L890.8 879.0 L892.4 879.0 L893.9 879.0 L895.4 879.0 L896.9 879.0 L898.4 879.0 L899.9 879.0 L901.4 879.0 L902.9 879.1 L904.4 879.1 L905.9 879.1 L907.4 879.1 L909.0 879.1 L910.5 879.1 L912.0 879.1 L913.5 879.1 L915.0 879.1 L916.5 879.2 L918.0 879.2 L919.5 879.2 L921.0 879.2 L922.5 879.2 L924.0 879.2 L925.6 879.3 L927.1 879.3 L928.6 879.3 L930.1 879.3 L931.6 879.4 L933.1 879.4 L934.6 879.4 L936.1 879.5 L937.6 879.5 L939.1 879.5 L940.7 879.6 L942.2 879.6 L943.7 879.7 L945.2 879.7 L946.7 879.8 L948.2 879.8 L950.2 880.6 L952.3 881.4 L953.8 881.5 L955.3 881.5 L956.8 881.6 L958.4 881.6 L959.9 881.7 L961.4 881.7 L962.9 881.8 L964.4 881.8 L965.9 881.8 L967.5 881.9 L969.0 881.9 L970.5 882.0 L972.0 882.0 L973.5 882.0 L975.0 882.1 L976.5 882.1 L978.1 882.1 L979.6 882.1 L981.1 882.2 L982.6 882.2 L984.1 882.2 L985.6 882.2 L987.1 882.3 L988.7 882.3 L990.2 882.3 L991.7 882.3 L993.2 882.3 L994.7 882.3 L996.2 882.3 L997.8 882.4 L999.3 882.4 L1000.8 882.4 L1002.3 882.4 L1003.8 882.4 L1005.3 882.4 L1006.8 882.4 L1008.4 882.4 L1009.9 882.4 L1011.4 882.4 L1012.9 882.4 L1014.4 882.4 L1015.9 882.5 L1017.5 882.5 L1019.0 882.5 L1020.5 882.5 L1022.0 882.5 L1023.5 882.5 L1025.0 882.5 L1026.5 882.5 L1028.1 882.5 L1029.6 882.5 L1031.1 882.5 L1032.6 882.5 L1034.1 882.5 L1035.6 882.5 L1037.2 882.5 L1038.7 882.5 L1040.2 882.5 L1041.7 882.5 L1043.2 882.6 L1044.7 882.6 L1046.2 882.6 L1047.8 882.6 L1049.3 882.6 L1050.8 882.6 L1052.3 882.6 L1053.8 882.6 L1055.3 882.6 L1056.8 882.7 L1058.4 882.7 L1059.9 882.7 L1061.4 882.7 L1062.9 882.7 L1064.4 882.8 L1065.9 882.8 L1067.5 882.8 L1069.0 882.8 L1070.5 882.9 L1072.0 882.9 L1073.5 882.9 L1075.0 882.9 L1076.5 883.0 L1078.1 883.0 L1079.6 883.0 L1081.1 883.1 L1082.6 883.1 L1084.1 883.2 L1085.6 883.2 L1087.2 883.3 L1088.7 883.3 L1090.2 883.3 L1091.7 883.4 L1093.4 883.6 L1095.0 883.9 L1096.7 884.3 L1098.3 884.6 L1100.0 884.7 L1101.5 884.7 L1103.0 884.7 L1104.5 884.8 L1106.0 884.8 L1107.5 884.8 L1109.0 884.8 L1110.5 884.8 L1112.0 884.9 L1113.5 884.9 L1115.1 884.9 L1116.6 884.9 L1118.1 884.9 L1119.6 884.9 L1121.1 884.9 L1122.6 884.9 L1124.1 885.0 L1125.6 885.0 L1127.1 885.0 L1128.6 885.0 L1130.1 885.0 L1131.6 885.0 L1133.1 885.0 L1134.6 885.0 L1136.1 885.0 L1137.6 885.0 L1139.1 885.0 L1140.6 885.0 L1142.1 885.0 L1143.6 885.1 L1145.2 885.1 L1146.7 885.1 L1148.2 885.1 L1149.7 885.1 L1151.2 885.1 L1152.7 885.1 L1154.2 885.1 L1155.7 885.1 L1157.2 885.1 L1158.7 885.1 L1160.2 885.1 L1161.7 885.1 L1163.2 885.1 L1164.7 885.1 L1166.2 885.1 L1167.7 885.1 L1169.2 885.1 L1170.7 885.1 L1172.2 885.1 L1173.8 885.1 L1175.3 885.1 L1176.8 885.1 L1178.3 885.1 L1179.8 885.1 L1181.3 885.1 L1182.8 885.1 L1184.3 885.1 L1185.8 885.1 L1187.3 885.1 L1188.8 885.1 L1190.3 885.1 L1191.8 885.1 L1193.3 885.1 L1194.8 885.1 L1196.3 885.1 L1197.8 885.1 L1199.3 885.1 L1200.8 885.1 L1202.4 885.2 L1203.9 885.2 L1205.4 885.2 L1206.9 885.2 L1208.4 885.2 L1209.9 885.2 L1211.4 885.2 L1212.9 885.2 L1214.4 885.2 L1215.9 885.2 L1217.4 885.2 L1218.9 885.2 L1220.4 885.2 L1221.9 885.2 L1223.4 885.3 L1224.9 885.3 L1226.4 885.3 L1227.9 885.3 L1229.4 885.3 L1230.9 885.3 L1232.5 885.3 L1234.0 885.4 L1235.5 885.4 L1237.0 885.4 L1238.5 885.4 L1240.0 885.4 L1241.5 885.4 L1243.0 885.5 L1244.5 885.5 L1246.0 885.5 L1247.7 885.6 L1249.4 885.9 L1251.2 886.2 L1252.9 886.6 L1254.6 886.9 L1256.3 887.0 L1257.8 887.0 L1259.3 887.1 L1260.8 887.1 L1262.3 887.2 L1263.8 887.2 L1265.3 887.3 L1266.9 887.3 L1268.4 887.3 L1269.9 887.4 L1271.4 887.4 L1272.9 887.4 L1274.4 887.5 L1275.9 887.5 L1277.4 887.5 L1278.9 887.6 L1280.4 887.6 L1281.9 887.6 L1283.4 887.7 L1284.9 887.7 L1286.5 887.7 L1288.0 887.8 L1289.5 887.8 L1291.0 887.8 L1292.5 887.8 L1294.0 887.9 L1295.5 887.9 L1297.0 887.9 L1298.5 887.9 L1300.0 888.0 L1301.5 888.0 L1303.0 888.0 L1304.5 888.0 L1306.1 888.0 L1307.6 888.1 L1309.1 888.1 L1310.6 888.1 L1312.1 888.1 L1313.6 888.1 L1315.1 888.1 L1316.6 888.2 L1318.1 888.2 L1319.6 888.2 L1321.1 888.2 L1322.6 888.2 L1324.1 888.2 L1325.7 888.2 L1327.2 888.2 L1328.7 888.3 L1330.2 888.3 L1331.7 888.3 L1333.2 888.3 L1334.7 888.3 L1336.2 888.3 L1337.7 888.3 L1339.2 888.3 L1340.7 888.3 L1342.2 888.3 L1343.7 888.4 L1345.3 888.4 L1346.8 888.4 L1348.3 888.4 L1349.8 888.4 L1351.3 888.4 L1352.8 888.4 L1354.3 888.4 L1355.8 888.4 L1357.3 888.4 L1358.8 888.4 L1360.3 888.4 L1361.8 888.4 L1363.3 888.4 L1364.9 888.4 L1366.4 888.4 L1367.9 888.5 L1369.4 888.5 L1370.9 888.5 L1372.4 888.5 L1373.9 888.5 L1375.4 888.5 L1376.9 888.5 L1378.4 888.5 L1379.9 888.5 L1381.4 888.5 L1382.9 888.5 L1384.4 888.5 L1386.0 888.5 L1387.5 888.5 L1389.0 888.5 L1390.5 888.5 L1392.0 888.5 L1393.5 888.5 L1395.0 888.5 L1396.5 888.5 L1398.0 888.5 L1399.5 888.5 L1401.0 888.5 L1402.5 888.6 L1404.0 888.6 L1405.6 888.6 L1407.1 888.6 L1408.6 888.6 L1410.1 888.6 L1411.6 888.6 L1413.1 888.6 L1414.6 888.6 L1416.1 888.6 L1417.6 888.6 L1419.1 888.6 L1420.6 888.6 L1422.1 888.6 L1423.6 888.6 L1425.2 888.7 L1426.7 888.7 L1428.2 888.7 L1429.7 888.7 L1431.2 888.7 L1432.7 888.7 L1434.2 888.7 L1435.7 888.7 L1437.2 888.7 L1438.7 888.7 L1440.2 888.8 L1441.7 888.8 L1443.2 888.8 L1444.8 888.8 L1446.3 888.8 L1447.8 888.8 L1449.3 888.8 L1450.8 888.9 L1452.3 888.9 L1453.8 888.9 L1455.3 888.9 L1456.8 888.9 L1458.3 888.9 L1459.8 889.0 L1461.3 889.0 L1462.8 889.0 L1464.4 889.0 L1465.9 889.0 L1467.4 889.1 L1468.9 889.1 L1470.4 889.1 L1471.9 889.1 L1473.4 889.2 L1474.9 889.2 L1476.4 889.2 L1477.9 889.2 L1479.4 889.3 L1480.9 889.3 L1482.4 889.3 L1484.0 889.4 L1485.5 889.4 L1487.0 889.4 L1488.5 889.5 L1490.0 889.5 L1491.5 889.5 L1493.0 889.6 L1494.5 889.6 L1496.0 889.6 L1497.5 889.7 L1499.0 889.7 L1500.5 889.7 L1502.0 889.8 L1503.6 889.8 L1505.1 889.9 L1506.6 889.9 L1508.1 890.0 L1509.6 890.0 L1511.1 890.1 L1512.6 890.1 L1514.3 890.4 L1516.0 890.9 L1517.7 891.1 L1519.2 891.1 L1520.7 891.1 L1522.2 891.1 L1523.8 891.1 L1525.3 891.1 L1526.8 891.1 L1528.3 891.1 L1529.8 891.1 L1531.3 891.1 L1532.8 891.1 L1534.3 891.1 L1535.9 891.1 L1537.4 891.1 L1538.9 891.1 L1540.4 891.1 L1541.9 891.1 L1543.4 891.1 L1544.9 891.1 L1546.4 891.1 L1548.0 891.1 L1549.5 891.0 L1551.0 891.0 L1552.5 891.0 L1554.0 891.0 L1555.5 891.0 L1557.0 891.0 L1558.5 891.0 L1560.1 891.0 L1561.6 891.0 L1563.1 891.0 L1564.6 891.0 L1566.1 891.0 L1567.6 891.0 L1569.1 891.0 L1570.6 891.0 L1572.2 891.0 L1573.7 891.0 L1575.2 891.0 L1576.7 891.0 L1578.2 891.0 L1579.7 891.0 L1581.2 891.0 L1582.7 890.9 L1584.3 890.9 L1585.8 890.9 L1587.3 890.9 L1588.8 890.9 L1590.3 890.9 L1591.8 890.9 L1593.3 890.9 L1594.8 890.9 L1596.4 890.9 L1597.9 890.9 L1599.4 890.9 L1600.9 890.9 L1602.4 890.9 L1603.9 890.9 L1605.4 890.9 L1606.9 890.9 L1608.5 890.9 L1610.0 890.9 L1611.5 890.9 L1613.0 890.9 L1615.0 891.2 L1616.9 891.8 L1618.9 892.6 L1620.7 893.4 L1622.4 894.3 L1624.2 895.4 L1625.9 896.6 L1627.5 897.9 L1629.0 899.5 L1630.6 900.6 L1632.8 901.6 L1635.0 902.2 L1637.0 902.5 L1638.9 902.6 L1640.5 902.3 L1642.0 901.7 L1643.6 900.8 L1645.6 899.2 L1647.5 897.0 L1649.5 894.3 L1651.2 891.4 L1653.0 887.9 L1654.8 884.0 L1656.5 880.1 L1658.3 875.9 L1660.0 871.4 L1661.8 866.9 L1663.6 862.5 L1665.4 858.3 L1667.2 854.3 L1668.9 850.2 L1670.7 846.0 L1672.5 841.6 L1674.2 837.0 L1676.0 832.5 L1677.7 828.3 L1679.7 823.9 L1681.6 819.9 L1683.6 816.6 L1685.6 813.9 L1687.5 811.7 L1689.5 810.2 L1691.3 809.3 L1693.0 808.6 L1694.8 808.1 L1696.6 807.8 L1698.2 807.7 L1699.7 807.6 L1701.3 807.5 L1702.9 807.4 L1704.4 807.3 L1706.0 807.3 L1707.6 807.2 L1709.1 807.2 L1710.7 807.1 L1712.3 807.1 L1713.8 807.0 L1715.4 807.0 L1717.0 807.0 L1718.5 806.9 L1720.1 806.9 L1721.7 806.9 L1723.2 806.9 L1724.8 806.9 L1726.3 806.9 L1727.8 806.9 L1729.4 806.9 L1730.9 806.9 L1732.4 806.9 L1733.9 806.9 L1735.4 806.9 L1737.0 806.9 L1738.5 806.9 L1740.0 807.0 L1741.5 807.0 L1743.0 807.0 L1744.6 807.0 L1746.1 807.0 L1747.6 807.0 L1749.1 807.1 L1750.6 807.1 L1752.1 807.1 L1753.7 807.1 L1755.2 807.1 L1756.7 807.2 L1758.2 807.2 L1759.7 807.2 L1761.3 807.3 L1762.8 807.3 L1764.3 807.4 L1765.8 807.4 L1767.3 807.4 L1768.9 807.5 L1770.4 807.5 L1771.9 807.6 L1773.9 807.9 L1775.8 808.5 L1777.8 808.8 L1779.3 808.8 L1780.8 808.9 L1782.3 808.9 L1783.8 808.9 L1785.3 808.9 L1786.8 808.9 L1788.3 809.0 L1789.8 809.0 L1791.3 809.0 L1792.8 809.0 L1794.3 809.0 L1795.8 809.1 L1797.3 809.1 L1798.8 809.1 L1800.3 809.1 L1801.8 809.1 L1803.3 809.1 L1804.9 809.1 L1806.4 809.2 L1807.9 809.2 L1809.4 809.2 L1810.9 809.2 L1812.4 809.2 L1813.9 809.2 L1815.4 809.2 L1816.9 809.2 L1818.4 809.2 L1819.9 809.2 L1821.4 809.2 L1822.9 809.3 L1824.4 809.3 L1825.9 809.3 L1827.4 809.3 L1828.9 809.3 L1830.4 809.3 L1831.9 809.3 L1833.4 809.3 L1834.9 809.3 L1836.4 809.3 L1837.9 809.3 L1839.4 809.3 L1840.9 809.3 L1842.4 809.3 L1843.9 809.3 L1845.4 809.3 L1846.9 809.3 L1848.4 809.3 L1849.9 809.3 L1851.4 809.3 L1852.9 809.4 L1854.5 809.4 L1856.0 809.4 L1857.5 809.4 L1859.0 809.4 L1860.5 809.4 L1862.0 809.4 L1863.5 809.4 L1865.0 809.4 L1866.5 809.4 L1868.0 809.4 L1869.5 809.4 L1871.0 809.4 L1872.5 809.4 L1874.0 809.5 L1875.5 809.5 L1877.0 809.5 L1878.5 809.5 L1880.0 809.5 L1881.5 809.5 L1883.0 809.5 L1884.5 809.5 L1886.0 809.5 L1887.5 809.6 L1889.0 809.6 L1890.5 809.6 L1892.0 809.6 L1893.5 809.6 L1895.0 809.6 L1896.5 809.6 L1898.0 809.6 L1899.5 809.6 L1901.0 809.7 L1902.5 809.7 L1904.0 809.7 L1905.5 809.7 L1907.0 809.7 L1908.5 809.7 L1910.0 809.7 L1911.5 809.7 L1913.0 809.7 L1914.5 809.7 L1916.0 809.7 L1917.5 809.7 L1919.1 809.8 L1920.6 809.8 L1922.1 809.8 L1923.6 809.8 L1925.1 809.8 L1926.6 809.8 L1928.1 809.8 L1929.6 809.8 L1931.1 809.8 L1932.6 809.8 L1934.1 809.8 L1935.6 809.8 L1937.1 809.9 L1938.6 809.9 L1940.1 809.9 L1941.6 809.9 L1943.1 809.9 L1944.6 809.9 L1946.1 809.9 L1947.6 809.9 L1949.1 809.9 L1950.6 809.9 L1952.1 810.0 L1953.6 810.0 L1955.1 810.0 L1956.6 810.0 L1958.1 810.0 L1959.6 810.0 L1961.1 810.0 L1962.6 810.0 L1964.1 810.1 L1965.6 810.1 L1967.1 810.1 L1968.6 810.1 L1970.1 810.1 L1971.6 810.1 L1973.1 810.1 L1974.6 810.2 L1976.1 810.2 L1977.6 810.2 L1979.1 810.2 L1980.6 810.2 L1982.1 810.3 L1983.6 810.3 L1985.1 810.3 L1986.6 810.3 L1988.1 810.3 L1989.6 810.4 L1991.1 810.4 L1992.7 810.4 L1994.2 810.4 L1995.7 810.5 L1997.2 810.5 L1998.7 810.5 L2000.2 810.5 L2001.7 810.6 L2003.2 810.6 L2004.7 810.6 L2006.2 810.6 L2007.7 810.7 L2009.2 810.7 L2010.7 810.7 L2012.2 810.8 L2013.7 810.8 L2015.2 810.8 L2016.7 810.9 L2018.2 810.9 L2019.7 810.9 L2021.2 811.0 L2022.7 811.0 L2024.2 811.0 L2025.7 811.1 L2027.2 811.1 L2028.7 811.2 L2030.2 811.2 L2031.9 811.3 L2033.6 811.6 L2035.3 812.0 L2037.1 812.3 L2038.8 812.6 L2040.5 812.7 L2042.0 812.7 L2043.5 812.7 L2045.0 812.8 L2046.5 812.8 L2048.0 812.8 L2049.5 812.8 L2051.0 812.8 L2052.5 812.9 L2054.0 812.9 L2055.5 812.9 L2057.0 812.9 L2058.5 812.9 L2060.0 813.0 L2061.5 813.0 L2063.0 813.0 L2064.5 813.0 L2066.0 813.0 L2067.5 813.0 L2069.0 813.1 L2070.5 813.1 L2072.0 813.1 L2073.5 813.1 L2075.0 813.1 L2076.5 813.1 L2078.1 813.2 L2079.6 813.2 L2081.1 813.2 L2082.6 813.2 L2084.1 813.2 L2085.6 813.2 L2087.1 813.2 L2088.6 813.2 L2090.1 813.3 L2091.6 813.3 L2093.1 813.3 L2094.6 813.3 L2096.1 813.3 L2097.6 813.3 L2099.1 813.3 L2100.6 813.3 L2102.1 813.4 L2103.6 813.4 L2105.1 813.4 L2106.6 813.4 L2108.1 813.4 L2109.6 813.4 L2111.1 813.4 L2112.6 813.4 L2114.1 813.4 L2115.6 813.4 L2117.1 813.4 L2118.6 813.5 L2120.1 813.5 L2121.6 813.5 L2123.1 813.5 L2124.6 813.5 L2126.1 813.5 L2127.6 813.5 L2129.1 813.5 L2130.6 813.5 L2132.1 813.5 L2133.6 813.5 L2135.1 813.5 L2136.6 813.5 L2138.1 813.5 L2139.6 813.5 L2141.1 813.5 L2142.6 813.6 L2144.1 813.6 L2145.6 813.6 L2147.1 813.6 L2148.6 813.6 L2150.1 813.6 L2151.7 813.6 L2153.2 813.6 L2154.7 813.6 L2156.2 813.6 L2157.7 813.6 L2159.2 813.6 L2160.7 813.6 L2162.2 813.6 L2163.7 813.6 L2165.2 813.6 L2166.7 813.6 L2168.2 813.6 L2169.7 813.6 L2171.2 813.6 L2172.7 813.6 L2174.2 813.6 L2175.7 813.6 L2177.2 813.6 L2178.7 813.6 L2180.2 813.6 L2181.7 813.6 L2183.2 813.6 L2184.7 813.6 L2186.2 813.7 L2187.7 813.7 L2189.2 813.7 L2190.7 813.7 L2192.2 813.7 L2193.7 813.7 L2195.2 813.7 L2196.7 813.7 L2198.2 813.7 L2199.7 813.7 L2201.2 813.7 L2202.7 813.7 L2204.2 813.7 L2205.7 813.7 L2207.2 813.7 L2208.7 813.7 L2210.2 813.7 L2211.7 813.7 L2213.2 813.7 L2214.7 813.7 L2216.2 813.7 L2217.7 813.7 L2219.2 813.7 L2220.7 813.7 L2222.2 813.7 L2223.7 813.7 L2225.2 813.7 L2226.8 813.7 L2228.3 813.7 L2229.8 813.7 L2231.3 813.7 L2232.8 813.7 L2234.3 813.7 L2235.8 813.7 L2237.3 813.7 L2238.8 813.7 L2240.3 813.7 L2241.8 813.7 L2243.3 813.7 L2244.8 813.7 L2246.3 813.7 L2247.8 813.7 L2249.3 813.7 L2250.8 813.7 L2252.3 813.7 L2253.8 813.7 L2255.3 813.7 L2256.8 813.7 L2258.3 813.7 L2259.8 813.7 L2261.3 813.7 L2262.8 813.7 L2264.3 813.7 L2265.8 813.7 L2267.3 813.7 L2268.8 813.7 L2270.3 813.7 L2271.8 813.7 L2273.3 813.7 L2274.8 813.7 L2276.3 813.7 L2277.8 813.7 L2279.3 813.7 L2280.8 813.7 L2282.3 813.7 L2283.8 813.8 L2285.3 813.8 L2286.8 813.8 L2288.3 813.8 L2289.8 813.8 L2291.3 813.8 L2292.8 813.8 L2294.3 813.8 L2295.8 813.8 L2297.3 813.8 L2298.8 813.8 L2300.4 813.8 L2301.9 813.8 L2303.4 813.8 L2304.9 813.8 L2306.4 813.8 L2307.9 813.8 L2309.4 813.8 L2310.9 813.8 L2312.4 813.8 L2313.9 813.8 L2315.4 813.8 L2316.9 813.9 L2318.4 813.9 L2319.9 813.9 L2321.4 813.9 L2322.9 813.9 L2324.4 813.9 L2325.9 813.9 L2327.4 813.9 L2328.9 813.9 L2330.4 813.9 L2331.9 813.9 L2333.4 813.9 L2334.9 813.9 L2336.4 814.0 L2337.9 814.0 L2339.4 814.0 L2340.9 814.0 L2342.4 814.0 L2343.9 814.0 L2345.4 814.0 L2346.9 814.0 L2348.4 814.0 L2349.9 814.0 L2351.4 814.1 L2352.9 814.1 L2354.4 814.1 L2355.9 814.1 L2357.4 814.1 L2358.9 814.1 L2360.4 814.1 L2361.9 814.1 L2363.4 814.2 L2364.9 814.2 L2366.4 814.2 L2367.9 814.2 L2369.4 814.2 L2370.9 814.2 L2372.4 814.2 L2374.0 814.3 L2375.5 814.3 L2377.0 814.3 L2378.5 814.3 L2380.0 814.3 L2381.5 814.3 L2383.0 814.3 L2384.5 814.4 L2386.0 814.4 L2387.5 814.4 L2389.0 814.4 L2390.5 814.4 L2392.0 814.5 L2393.5 814.5 L2395.0 814.5 L2396.5 814.5 L2398.0 814.5 L2399.5 814.5 L2401.0 814.6 L2402.5 814.6 L2404.0 814.6 L2405.5 814.6 L2407.0 814.7 L2408.5 814.7 L2410.0 814.7 L2411.5 814.9 L2413.1 815.2 L2414.6 815.7 L2416.2 816.0 L2417.7 816.2 L2419.2 816.2 L2420.7 816.2 L2422.2 816.3 L2423.7 816.3 L2425.2 816.3 L2426.7 816.3 L2428.2 816.3 L2429.7 816.3 L2431.2 816.4 L2432.7 816.4 L2434.3 816.4 L2435.8 816.4 L2437.3 816.4 L2438.8 816.4 L2440.3 816.4 L2441.8 816.5 L2443.3 816.5 L2444.8 816.5 L2446.3 816.5 L2447.8 816.5 L2449.3 816.5 L2450.8 816.5 L2452.3 816.5 L2453.8 816.5 L2455.3 816.5 L2456.8 816.6 L2458.3 816.6 L2459.8 816.6 L2461.3 816.6 L2462.8 816.6 L2464.4 816.6 L2465.9 816.6 L2467.4 816.6 L2468.9 816.6 L2470.4 816.6 L2471.9 816.6 L2473.4 816.6 L2474.9 816.6 L2476.4 816.6 L2477.9 816.6 L2479.4 816.7 L2480.9 816.7 L2482.4 816.7 L2483.9 816.7 L2485.4 816.7 L2486.9 816.7 L2488.4 816.7 L2489.9 816.7 L2491.4 816.7 L2492.9 816.7 L2494.4 816.7 L2496.0 816.7 L2497.5 816.7 L2499.0 816.7 L2500.5 816.7 L2502.0 816.7 L2503.5 816.7 L2505.0 816.7 L2506.5 816.7 L2508.0 816.7 L2509.5 816.7 L2511.0 816.7 L2512.5 816.7 L2514.0 816.7 L2515.5 816.7 L2517.0 816.7 L2518.5 816.7 L2520.0 816.7 L2521.5 816.7 L2523.0 816.7 L2524.5 816.7 L2526.1 816.7 L2527.6 816.7 L2529.1 816.7 L2530.6 816.7 L2532.1 816.7 L2533.6 816.7 L2535.1 816.7 L2536.6 816.7 L2538.1 816.7 L2539.6 816.7 L2541.1 816.7 L2542.6 816.7 L2544.1 816.7 L2545.6 816.7 L2547.1 816.7 L2548.6 816.7 L2550.1 816.7 L2551.6 816.7 L2553.1 816.8 L2554.6 816.8 L2556.2 816.8 L2557.7 816.8 L2559.2 816.8 L2560.7 816.8 L2562.2 816.8 L2563.7 816.8 L2565.2 816.8 L2566.7 816.8 L2568.2 816.8 L2569.7 816.8 L2571.2 816.8 L2572.7 816.8 L2574.2 816.8 L2575.7 816.8 L2577.2 816.8 L2578.7 816.8 L2580.2 816.8 L2581.7 816.8 L2583.2 816.8 L2584.7 816.8 L2586.2 816.8 L2587.8 816.8 L2589.3 816.9 L2590.8 816.9 L2592.3 816.9 L2593.8 816.9 L2595.3 816.9 L2596.8 816.9 L2598.3 816.9 L2599.8 816.9 L2601.3 816.9 L2602.8 816.9 L2604.3 816.9 L2605.8 816.9 L2607.3 817.0 L2608.8 817.0 L2610.3 817.0 L2611.8 817.0 L2613.3 817.0 L2614.8 817.0 L2616.3 817.0 L2617.9 817.0 L2619.4 817.1 L2620.9 817.1 L2622.4 817.1 L2623.9 817.1 L2625.4 817.1 L2626.9 817.1 L2628.4 817.1 L2629.9 817.2 L2631.4 817.2 L2632.9 817.2 L2634.5 817.2 L2636.2 817.3 L2637.8 817.4 L2639.5 817.6 L2641.1 817.8 L2642.8 818.7 L2644.6 820.5 L2646.3 822.4 L2647.9 823.9 L2649.5 825.4 L2651.0 827.0 L2652.6 828.6 L2654.2 830.3 L2655.8 832.0 L2657.4 833.7 L2658.9 835.5 L2660.5 837.4 L2662.1 839.5 L2663.8 841.8 L2665.4 844.2 L2667.0 846.9 L2668.7 850.0 L2670.4 853.7 L2672.2 858.0 L2673.9 863.2 L2675.9 871.1 L2677.9 881.6 L2680.5 902.6 L2683.2 931.6 L2685.8 963.2 L2688.4 989.5 L2690.0 1003.6 L2691.6 1015.8 L2693.2 1025.9 L2694.7 1034.8 L2696.3 1042.1 L2698.3 1049.4 L2700.3 1055.3 L2702.6 1060.6 L2704.2 1062.4 L2706.0 1061.2 L2707.8 1059.2 L2709.5 1056.6 L2711.2 1053.2 L2713.0 1049.1 L2714.7 1044.7 L2716.3 1040.4 L2718.0 1035.9 L2719.7 1031.2 L2721.3 1026.3 L2723.0 1021.4 L2724.6 1016.3 L2726.2 1011.0 L2727.9 1005.3 L2729.6 999.1 L2731.2 992.5 L2732.8 985.6 L2734.5 978.9 L2736.2 972.3 L2737.8 965.8 L2739.4 959.2 L2741.1 952.6 L2742.7 946.0 L2744.3 939.3 L2746.0 932.7 L2747.6 926.3 L2749.2 920.1 L2750.9 914.0 L2752.5 908.2 L2754.2 902.6 L2755.8 897.5 L2757.4 892.7 L2758.9 888.0 L2760.5 883.4 L2762.1 878.9 L2763.7 874.5 L2765.3 870.3 L2766.8 866.1 L2768.4 862.0 L2770.0 857.9 L2771.6 853.7 L2773.2 849.5 L2774.7 845.3 L2776.3 841.5 L2777.9 838.2 L2779.5 835.4 L2781.1 832.8 L2782.6 830.4 L2784.2 828.3 L2785.8 826.3 L2787.4 824.4 L2789.0 822.6 L2790.5 820.9 L2792.1 819.5 L2793.7 818.4 L2795.2 817.6 L2796.7 816.9 L2798.2 816.2 L2799.7 815.6 L2801.2 815.1 L2802.7 814.8 L2804.2 814.5 L2805.7 814.3 L2807.3 814.1 L2808.8 813.9 L2810.4 813.7 L2811.9 813.6 L2813.5 813.4 L2815.0 813.3 L2816.6 813.2 L2818.1 813.1 L2819.7 812.9 L2821.2 812.9 L2822.8 812.8 L2824.3 812.7 L2825.9 812.7 L2827.4 812.6 L2829.0 812.6 L2830.5 812.6 L2832.0 812.6 L2833.5 812.6 L2835.1 812.6 L2836.6 812.6 L2838.1 812.6 L2839.6 812.6 L2841.1 812.6 L2842.7 812.6 L2844.2 812.7 L2845.7 812.7 L2847.2 812.7 L2848.7 812.7 L2850.2 812.7 L2851.8 812.8 L2853.3 812.8 L2854.8 812.8 L2856.3 812.8 L2857.8 812.9 L2859.4 812.9 L2860.9 812.9 L2862.4 813.0 L2863.9 813.0 L2865.4 813.1 L2867.0 813.1 L2868.5 813.2 L2870.0 813.2 L2871.5 813.3 L2873.1 813.6 L2874.6 814.0 L2876.1 814.3 L2877.7 814.6 L2879.2 814.7 L2880.7 814.7 L2882.2 814.7 L2883.7 814.7 L2885.3 814.7 L2886.8 814.7 L2888.3 814.7 L2889.8 814.7 L2891.3 814.8 L2892.8 814.8 L2894.3 814.8 L2895.8 814.8 L2897.4 814.8 L2898.9 814.8 L2900.4 814.8 L2901.9 814.8 L2903.4 814.8 L2904.9 814.8 L2906.4 814.8 L2907.9 814.8 L2909.5 814.8 L2911.0 814.8 L2912.5 814.8 L2914.0 814.8 L2915.5 814.8 L2917.0 814.8 L2918.5 814.8 L2920.0 814.8 L2921.6 814.8 L2923.1 814.8 L2924.6 814.8 L2926.1 814.8 L2927.6 814.8 L2929.1 814.8 L2930.6 814.8 L2932.2 814.8 L2933.7 814.8 L2935.2 814.8 L2936.7 814.8 L2938.2 814.8 L2939.7 814.8 L2941.2 814.8 L2942.7 814.8 L2944.3 814.8 L2945.8 814.8 L2947.3 814.8 L2948.8 814.8 L2950.3 814.8 L2951.8 814.8 L2953.3 814.8 L2954.8 814.8 L2956.4 814.8 L2957.9 814.8 L2959.4 814.8 L2960.9 814.8 L2962.4 814.8 L2963.9 814.9 L2965.4 814.9 L2966.9 814.9 L2968.5 814.9 L2970.0 814.9 L2971.5 814.9 L2973.0 814.9 L2974.6 815.3 L2976.1 816.2 L2977.7 816.6 L2979.2 816.6 L2980.8 816.6 L2982.3 816.6 L2983.8 816.6 L2985.4 816.6 L2986.9 816.6 L2988.5 816.6 L2990.0 816.6 L2991.5 816.6 L2993.1 816.6 L2994.6 816.6 L2996.1 816.6 L2997.7 816.6 L2999.2 816.6 L3000.7 816.6 L3002.3 816.6 L3003.8 816.6 L3005.3 816.6 L3006.9 816.6 L3008.4 816.6 L3010.0 816.6 L3011.5 816.6 L3013.0 816.6 L3014.6 816.6 L3016.1 816.6 L3017.6 816.6 L3019.2 816.6 L3020.7 816.6 L3022.2 816.6 L3023.8 816.6 L3025.3 816.6 L3026.9 816.6 L3028.4 816.6 L3029.9 816.6 L3031.5 816.6 L3033.0 816.6 L3034.6 816.6 L3036.2 816.8 L3037.8 816.9 L3039.4 817.2 L3041.1 817.4 L3042.7 817.5 L3044.3 817.7 L3045.9 817.7 L3047.6 817.3 L3049.2 816.2 L3050.9 814.8 L3052.5 813.3 L3054.2 811.9 L3055.8 810.8 L3057.3 809.7 L3058.9 808.6 L3060.5 807.5 L3062.0 806.2 L3063.6 804.8 L3065.4 802.8 L3067.1 800.5 L3068.9 797.9 L3070.7 795.4 L3072.3 793.2 L3073.8 790.8 L3075.4 788.5 L3077.0 786.1 L3078.5 783.7 L3080.1 781.3 L3081.7 779.0 L3083.2 776.6 L3084.8 774.3 L3086.4 772.0 L3087.9 769.7 L3089.5 767.4 L3091.1 765.0 L3092.6 762.6 L3094.2 760.1 L3095.9 757.4 L3097.6 754.6 L3099.3 751.7 L3100.9 748.8 L3102.6 745.9 L3104.3 743.0 L3106.0 740.1 L3107.8 737.1 L3109.5 734.0 L3111.2 731.0 L3113.0 728.3 L3114.6 726.1 L3116.1 724.0 L3117.7 722.0 L3119.3 720.1 L3120.8 718.4 L3122.4 717.0 L3123.9 715.7 L3125.4 714.5 L3126.9 713.4 L3128.5 712.4 L3130.0 711.5 L3131.5 710.7 L3133.0 710.2 L3134.6 709.7 L3136.2 709.3 L3137.9 708.9 L3139.5 708.6 L3141.1 708.3 L3142.8 708.0 L3144.4 707.9 L3146.0 707.8 L3147.5 707.8 L3149.0 707.7 L3150.5 707.7 L3152.0 707.7 L3153.5 707.6 L3155.0 707.6 L3156.5 707.6 L3158.0 707.5 L3159.5 707.5 L3161.0 707.5 L3162.5 707.5 L3164.0 707.4 L3165.5 707.4 L3167.0 707.4 L3168.5 707.4 L3170.0 707.4 L3171.5 707.3 L3173.0 707.3 L3174.5 707.3 L3176.0 707.3 L3177.5 707.3 L3179.0 707.3 L3180.5 707.2 L3182.1 707.2 L3183.6 707.2 L3185.1 707.2 L3186.6 707.2 L3188.1 707.2 L3189.6 707.2 L3191.1 707.2 L3192.6 707.2 L3194.1 707.2 L3195.6 707.1 L3197.1 707.1 L3198.6 707.1 L3200.1 707.1 L3201.6 707.1 L3203.1 707.1 L3204.6 707.1 L3206.1 707.1 L3207.6 707.1 L3209.1 707.1 L3210.6 707.1 L3212.1 707.1 L3213.6 707.1 L3215.1 707.1 L3216.6 707.1 L3218.1 707.1 L3219.6 707.1 L3221.2 707.1 L3222.7 707.1 L3224.2 707.1 L3225.7 707.1 L3227.2 707.1 L3228.7 707.2 L3230.3 707.2 L3231.8 707.2 L3233.3 707.2 L3234.8 707.2 L3236.3 707.2 L3237.8 707.2 L3239.4 707.3 L3240.9 707.3 L3242.4 707.3 L3243.9 707.3 L3245.4 707.4 L3246.9 707.4 L3248.5 707.4 L3250.0 707.4 L3251.5 707.5 L3253.0 707.5 L3254.5 707.5 L3256.0 707.5 L3257.6 707.6 L3259.1 707.6 L3260.6 707.6 L3262.1 707.7 L3263.6 707.7 L3265.1 707.7 L3266.7 707.7 L3268.2 707.8 L3269.7 707.8 L3271.2 707.8 L3272.7 707.9 L3274.2 707.9 L3275.8 707.9 L3277.3 708.0 L3278.8 708.0 L3280.3 708.0 L3281.8 708.0 L3283.3 708.1 L3284.9 708.1 L3286.4 708.1 L3287.9 708.2 L3289.4 708.2 L3290.9 708.2 L3292.4 708.2 L3294.0 708.3 L3295.5 708.3 L3297.0 708.3" stroke="#06090b" stroke-width="4.7" fill="none" stroke-linejoin="round"/>
<path d="M316.3 993.0 L352.0 993.0 L358.0 992.1 V991.6 L414.0 992.4 L420.0 993.5 V994.0 L430.0 993.5 V993.2 L440.0 994.1 V994.6 L690.0 998.0 L700.0 999.0 V999.5 L730.0 999.6 L742.0 998.0 V997.2 L748.0 998.3 V998.8 L812.0 1000.0 L820.0 1000.8 V1001.2 L859.2 1000.6" stroke="#06090b" stroke-width="4.7" fill="none" stroke-linejoin="round"/>
<path d="M868.2 1000.6 L895.0 1001.3 V1001.6 L900.0 1002.5 V1003.0 L905.0 1001.8 V1001.2 L910.0 1002.5 V1003.2 L1000.0 1003.5 L1080.0 1004.6 L1090.0 1005.5 V1006.0 L1100.0 1005.2 V1004.8 L1180.0 1006.5 L1275.0 1009.0 L1285.0 1008.3 V1008.0 L1362.0 1010.0 L1500.0 1011.2 L1602.4 1011.5 L1604.7 1012.1 V1012.4 H1606.5 V1008.5 H1608.3 L1609.0 899.0 L1610.6 899.0 L1611.1 927.2 H1612.1 V931.4 H1613.2 H1614.2 V935.5 H1615.3 H1616.5 V940.2 H1617.7 H1618.8 V944.9 H1620.0 L1623.6 944.9 H1624.5 V940.2 H1625.3 H1626.2 V935.5 H1627.1 H1627.7 V928.4 H1628.3 H1628.9 V921.3 H1629.5 H1630.1 V916.6 H1630.7 H1631.2 V911.9 H1631.8 H1632.4 V907.2 H1633.0 H1633.6 V902.5 H1634.2 L1635.3 886.0 H1635.9 V877.8 H1636.5 H1637.1 V869.5 H1637.7 H1638.3 V863.2 H1638.9 H1639.5 V857.0 H1640.0 H1640.6 V850.7 H1641.2 H1641.8 V841.3 H1642.4 H1643.0 V831.9 H1643.6 H1644.3 V824.8 H1645.1 H1645.8 V817.7 H1646.6 H1647.3 V809.5 H1648.0 H1648.8 V801.2 H1649.5 H1650.4 V796.5 H1651.2 H1652.1 V791.8 H1653.0 H1653.6 V787.1 H1654.2 H1654.8 V782.4 H1655.3 H1655.9 V777.7 H1656.5 H1657.3 V773.0 H1658.1 H1658.8 V768.3 H1659.6 H1660.4 V763.6 H1661.2 H1662.7 V757.7 H1664.2 H1665.6 V751.8 H1667.1 H1668.6 V747.1 H1670.0 H1671.5 V742.4 H1673.0 L1678.2 742.1 V741.9 L1678.7 761.2 H1679.3 V768.2 H1680.0 H1680.7 V775.3 H1681.3 H1681.9 V780.8 H1682.5 H1683.0 V786.3 H1683.6 H1684.2 V791.8 H1684.8 H1685.5 V796.5 H1686.2 H1686.9 V801.3 H1687.6 H1688.3 V806.0 H1689.0 H1690.0 V811.3 H1691.0 H1692.0 V816.6 H1693.0 H1694.5 V820.1 H1696.0 H1697.4 V823.6 H1698.9 L1708.3 827.5 V829.5 L1720.1 832.9 V834.7 L1731.5 837.9 V839.6 L1743.7 843.0 V844.8 L1759.2 849.5 V851.9 L1771.9 855.8 V857.8 L1781.2 860.3 V861.5 L1795.5 865.3 V867.2 L1812.2 871.8 V874.2 L1819.0 876.1 V877.1 L1832.9 880.6 V882.4 L1842.6 884.8 V886.0 L1851.7 888.3 V889.5 L1866.1 893.1 V895.0 L1880.0 898.1 V899.7 L1890.5 902.0 V903.1 L1901.5 905.5 V906.7 L1910.7 908.7 V909.7 L1923.4 912.5 V913.9 L1929.3 915.1 V915.8 L1955.1 920.1 V922.3 L1973.9 925.4 V927.0 L1996.9 930.6 V932.5 L2025.1 937.0 V939.3 L2051.2 943.7 V946.0 L2071.6 948.8 V950.2 L2089.5 952.7 V953.9 L2102.5 955.7 V956.6 L2130.4 959.6 V961.1 L2153.7 963.5 V964.8 L2177.6 967.0 V968.1 L2198.8 970.0 V971.0 L2216.0 972.4 V973.2 L2234.1 974.7 V975.5 L2256.2 977.3 V978.3 L2280.9 980.0 V980.8 L2307.5 982.6 V983.5 L2333.4 985.0 V985.7 L2358.7 987.2 V987.9 L2386.1 989.3 V990.0 L2410.0 991.2 V991.8 L2424.0 992.3 V992.6 L2440.9 993.3 V993.6 L2466.3 994.6 V995.1 L2486.9 995.7 V996.1 L2512.5 996.9 V997.3 L2532.1 997.9 V998.2 L2547.1 998.7 V998.9 L2563.7 999.4 V999.7 L2588.6 1000.4 V1000.8 L2606.4 1001.3 V1001.5 L2614.9 1001.8 V1001.9 L2638.9 1002.9 V1003.4 H2639.7 V1000.0 H2640.5 L2651.6 998.3 V997.4 L2662.1 994.4 V992.9 L2672.6 990.7 V989.5 L2681.8 988.1 V987.4 H2682.9 V982.9 H2683.9 L2685.0 878.9 L2687.4 878.9 L2687.9 932.9 H2688.7 V934.2 H2689.5 L2690.0 952.6 H2690.8 V957.2 H2691.6 H2692.4 V961.8 H2693.2 H2694.3 V964.0 H2695.4 H2696.5 V966.3 H2697.6 L2701.6 966.0 V965.8 H2703.1 V959.2 H2704.7 H2705.4 V952.7 H2706.1 H2706.9 V946.1 H2707.6 H2708.4 V938.9 H2709.2 H2710.0 V931.6 H2710.8 H2711.5 V925.0 H2712.1 H2712.8 V918.4 H2713.4 H2714.4 V900.0 H2715.3 H2716.0 V895.4 H2716.6 H2717.2 V890.8 H2717.9 H2718.7 V871.1 H2719.5 H2720.3 V864.5 H2721.1 H2721.8 V857.9 H2722.6 H2723.2 V852.6 H2723.8 H2724.3 V847.4 H2724.9 H2725.5 V842.1 H2726.1 H2726.9 V835.5 H2727.6 H2728.4 V828.9 H2729.2 H2729.9 V823.7 H2730.5 H2731.2 V818.4 H2731.9 H2732.5 V813.2 H2733.2 H2734.2 V806.6 H2735.1 H2736.1 V800.0 H2737.1 H2738.2 V793.9 H2739.3 H2740.4 V787.7 H2741.5 H2742.6 V781.6 H2743.7 H2744.8 V776.8 H2745.9 H2747.0 V771.9 H2748.1 H2749.2 V767.1 H2750.3 H2751.4 V761.8 H2752.5 H2753.6 V756.6 H2754.6 H2755.7 V751.3 H2756.8 H2757.9 V746.5 H2759.0 H2760.1 V741.6 H2761.2 H2762.3 V736.8 H2763.4 H2764.5 V732.0 H2765.6 H2766.7 V727.2 H2767.8 H2768.9 V722.4 H2770.0 H2771.3 V720.4 H2772.7 H2774.0 V718.4 H2775.3 L2781.1 718.1 V717.9 L2781.8 730.3 H2782.5 V740.1 H2783.2 H2783.8 V750.0 H2784.5 H2785.2 V759.9 H2785.8 H2786.4 V769.7 H2787.1 H2787.8 V775.9 H2788.4 H2789.1 V782.0 H2789.8 H2790.4 V788.2 H2791.1 H2791.8 V793.4 H2792.4 H2793.1 V798.7 H2793.7 H2794.3 V803.9 H2795.0 H2796.3 V808.5 H2797.7 H2799.0 V813.2 H2800.3 L2812.1 818.7 V821.6 L2822.5 824.3 V825.7 L2830.5 827.8 V828.9 L2843.1 832.7 V834.6 L2856.8 838.7 V840.8 L2871.7 844.7 V846.7 L2883.2 849.7 V851.3 L2897.3 855.0 V856.9 L2909.5 860.2 V861.8 L2921.9 865.1 V866.7 L2932.6 869.6 V871.0 L2943.5 873.9 V875.4 L2960.3 879.8 V882.1 L2967.1 883.9 V884.8 L2978.5 887.7 V889.2 L2990.6 892.2 V893.8 L3001.3 896.0 V897.2 L3014.2 899.9 V901.3 L3023.1 903.1 V904.1 L3023.8 849.5 H3025.4 V846.0 H3027.1 L3030.2 846.0 H3030.9 V840.7 H3031.6 H3032.3 V835.4 H3033.0 H3033.6 V829.9 H3034.2 H3034.8 V824.4 H3035.3 H3035.9 V818.9 H3036.5 H3037.1 V813.4 H3037.7 H3038.3 V807.9 H3038.9 H3039.5 V802.4 H3040.1 H3040.7 V796.9 H3041.3 H3041.8 V791.5 H3042.4 H3043.0 V786.0 H3043.6 H3044.2 V780.7 H3044.8 H3045.3 V775.4 H3045.9 H3046.8 V768.9 H3047.7 H3048.6 V762.4 H3049.5 H3050.1 V757.7 H3050.7 H3051.2 V753.0 H3051.8 H3052.4 V748.3 H3053.0 H3053.6 V743.6 H3054.2 H3054.8 V738.9 H3055.3 H3055.9 V734.2 H3056.5 H3057.1 V729.5 H3057.7 H3058.3 V724.8 H3058.9 H3059.5 V720.1 H3060.1 H3060.7 V715.4 H3061.3 H3061.8 V710.6 H3062.4 H3063.0 V705.9 H3063.6 H3064.4 V700.4 H3065.2 H3065.9 V695.0 H3066.7 H3067.5 V689.5 H3068.3 H3069.3 V684.8 H3070.3 H3071.2 V680.0 H3072.2 H3073.2 V675.3 H3074.2 H3075.4 V670.6 H3076.6 H3077.8 V665.9 H3078.9 H3080.1 V661.2 H3081.3 H3083.1 V656.5 H3084.8 H3086.6 V651.8 H3088.3 L3096.6 647.9 V645.9 L3106.0 643.9 V642.8 L3117.3 642.5 V642.4 L3118.2 658.9 H3119.0 V666.0 H3119.8 H3120.5 V673.0 H3121.3 H3121.9 V677.7 H3122.5 H3123.1 V682.4 H3123.6 H3124.2 V687.1 H3124.8 H3125.7 V692.4 H3126.6 H3127.4 V697.7 H3128.3 H3129.5 V703.0 H3130.7 H3131.8 V708.3 H3133.0 H3135.9 V716.5 H3138.9 H3140.5 V718.9 H3142.0 H3143.6 V721.2 H3145.2 H3146.7 V723.6 H3148.3 L3157.8 727.5 V729.5 L3168.9 734.4 V736.9 L3178.9 741.3 V743.6 L3190.5 749.0 V751.7 L3202.5 757.3 V760.1 L3212.1 763.9 V765.9 L3226.0 771.4 V774.2 L3239.7 779.6 V782.4 L3249.6 786.3 V788.3 L3263.4 793.8 V796.6 L3273.1 800.4 V802.4 L3285.7 807.1 V809.5 L3297.0 813.7 V815.8" stroke="#06090b" stroke-width="4.7" fill="none" stroke-linejoin="round"/>
<path d="M316.9 836.1 L859.2 836.1" stroke="#06090b" stroke-width="4.7" fill="none" stroke-linejoin="miter"/>
<path d="M868.2 836.1 L3019.6 836.1 L3019.6 727.0 L3297.0 727.0" stroke="#06090b" stroke-width="4.7" fill="none" stroke-linejoin="miter"/>
<path d="M316.3 851.6 L317.8 851.6 L319.3 851.6 L320.8 851.7 L322.3 851.7 L323.8 851.7 L325.3 851.7 L326.8 851.8 L328.4 851.8 L329.9 851.8 L331.4 851.8 L332.9 851.8 L334.4 851.8 L335.9 851.9 L337.4 851.9 L338.9 851.9 L340.4 851.9 L341.9 852.0 L343.4 852.0 L344.9 852.0 L346.4 852.0 L347.9 852.0 L349.5 852.1 L351.0 852.1 L352.5 852.1 L354.0 852.2 L355.5 852.2 L357.0 852.2 L358.5 852.3 L360.0 852.3 L361.6 852.3 L363.2 852.4 L364.8 852.4 L366.4 852.5 L368.0 852.5 L369.6 852.6 L371.3 852.6 L372.9 852.7 L374.5 852.8 L376.1 852.9 L377.7 853.0 L379.3 853.2 L381.0 854.1 L382.7 855.9 L384.4 857.3 L385.9 858.1 L387.5 858.8 L389.0 859.5 L390.6 860.0 L392.1 860.4 L393.7 860.7 L395.4 860.9 L397.0 861.1 L398.6 861.3 L400.2 861.4 L401.9 861.5 L403.5 861.7 L405.1 861.9 L406.7 862.1 L408.4 862.5 L410.0 862.9 L411.6 865.0 L413.1 867.0 L414.7 867.2 L416.2 867.5 L417.8 867.7 L419.3 867.8 L420.9 868.0 L422.5 868.1 L424.0 868.3 L425.6 868.4 L427.2 868.5 L428.7 868.6 L430.3 868.6 L431.8 868.7 L433.4 868.8 L435.0 868.8 L436.5 868.9 L438.1 868.9 L439.7 868.9 L441.2 869.0 L442.8 869.0 L444.3 869.1 L445.9 869.1 L447.4 869.1 L448.9 869.2 L450.4 869.2 L452.0 869.2 L453.5 869.3 L455.0 869.3 L456.5 869.3 L458.0 869.4 L459.5 869.4 L461.1 869.4 L462.6 869.4 L464.1 869.4 L465.6 869.5 L467.1 869.5 L468.6 869.5 L470.1 869.5 L471.7 869.5 L473.2 869.5 L474.7 869.6 L476.2 869.6 L477.7 869.6 L479.2 869.6 L480.7 869.6 L482.3 869.6 L483.8 869.6 L485.3 869.6 L486.8 869.6 L488.3 869.6 L489.8 869.6 L491.4 869.6 L492.9 869.7 L494.4 869.7 L495.9 869.7 L497.4 869.7 L498.9 869.7 L500.4 869.7 L502.0 869.7 L503.5 869.7 L505.0 869.7 L506.5 869.7 L508.0 869.7 L509.5 869.8 L511.1 869.8 L512.6 869.8 L514.1 869.8 L515.6 869.8 L517.1 869.8 L518.6 869.9 L520.1 869.9 L521.7 869.9 L523.2 869.9 L524.7 870.0 L526.2 870.0 L527.7 870.0 L529.2 870.1 L530.7 870.1 L532.3 870.1 L533.8 870.2 L535.3 870.2 L536.8 870.3 L538.3 870.3 L539.8 870.4 L541.4 870.4 L542.9 870.5 L544.4 870.5 L545.9 870.6 L547.7 871.9 L549.5 873.2 L551.0 873.2 L552.5 873.2 L554.1 873.2 L555.6 873.2 L557.1 873.2 L558.6 873.2 L560.1 873.2 L561.7 873.2 L563.2 873.2 L564.7 873.2 L566.2 873.2 L567.8 873.2 L569.3 873.2 L570.8 873.2 L572.3 873.2 L573.8 873.2 L575.4 873.2 L576.9 873.2 L578.4 873.2 L579.9 873.2 L581.4 873.2 L583.0 873.2 L584.5 873.2 L586.0 873.2 L587.5 873.2 L589.1 873.2 L590.6 873.2 L592.1 873.2 L593.6 873.2 L595.1 873.2 L596.7 873.2 L598.2 873.2 L599.7 873.2 L601.2 873.2 L602.7 873.2 L604.3 873.2 L605.8 873.2 L607.3 873.2 L608.8 873.2 L610.3 873.2 L611.9 873.3 L613.4 873.3 L614.9 873.3 L616.4 873.3 L617.9 873.3 L619.5 873.4 L621.0 873.4 L622.5 873.4 L624.0 873.4 L625.5 873.5 L627.1 873.5 L628.6 873.5 L630.1 873.5 L631.6 873.6 L633.1 873.6 L634.7 873.6 L636.2 873.7 L637.7 873.7 L639.2 873.8 L640.7 873.8 L642.3 873.8 L643.8 873.9 L645.3 873.9 L646.8 873.9 L648.3 874.0 L649.9 874.0 L651.4 874.1 L652.9 874.1 L654.4 874.2 L655.9 874.2 L657.4 874.2 L659.0 874.3 L660.5 874.3 L662.0 874.4 L663.5 874.4 L665.0 874.5 L666.6 874.5 L668.1 874.6 L669.6 874.6 L671.1 874.6 L672.6 874.7 L674.2 874.7 L675.7 874.8 L677.2 874.8 L678.7 874.9 L680.2 874.9 L681.8 874.9 L683.3 875.0 L684.8 875.0 L686.3 875.1 L687.8 875.1 L689.4 875.1 L690.9 875.2 L692.4 875.2 L693.9 875.3 L695.4 875.3 L697.0 875.3 L698.5 875.4 L700.0 875.4 L701.5 875.4 L703.0 875.5 L704.5 875.5 L706.0 875.5 L707.5 875.6 L709.0 875.6 L710.5 875.6 L712.0 875.7 L713.5 875.7 L715.0 875.7 L716.5 875.8 L718.0 875.8 L719.5 875.8 L721.0 875.9 L722.5 875.9 L724.0 875.9 L725.5 876.0 L727.0 876.0 L728.5 876.0 L730.0 876.0 L731.5 876.1 L733.0 876.1 L734.5 876.1 L736.0 876.2 L737.5 876.2 L739.0 876.2 L740.6 876.3 L742.1 876.3 L743.6 876.3 L745.1 876.4 L746.6 876.4 L748.1 876.4 L749.6 876.5 L751.1 876.5 L752.6 876.5 L754.1 876.6 L755.6 876.6 L757.1 876.6 L758.6 876.7 L760.1 876.7 L761.6 876.7 L763.1 876.8 L764.6 876.8 L766.1 876.8 L767.6 876.9 L769.1 876.9 L770.6 876.9 L772.1 876.9 L773.6 877.0 L775.1 877.0 L776.6 877.0 L778.1 877.1 L779.6 877.1 L781.1 877.1 L782.6 877.2 L784.1 877.2 L785.6 877.2 L787.1 877.3 L788.6 877.3 L790.1 877.3 L791.6 877.4 L793.1 877.4 L794.6 877.4 L796.1 877.5 L797.6 877.5 L799.1 877.5 L800.6 877.6 L802.1 877.6 L803.6 877.6 L805.1 877.6 L806.6 877.7 L808.1 877.7 L809.6 877.7 L811.1 877.8 L812.6 877.8 L814.1 877.8 L815.6 877.9 L817.1 877.9 L818.6 877.9 L820.2 878.0 L821.7 878.0 L823.2 878.0 L824.7 878.1 L826.2 878.1 L827.7 878.1 L829.2 878.2 L830.7 878.2 L832.2 878.2 L833.7 878.3 L835.2 878.3 L836.7 878.3 L838.2 878.4 L839.7 878.4 L841.2 878.4 L842.7 878.4 L844.2 878.5 L845.7 878.5 L847.2 878.5 L848.7 878.6 L850.2 878.6 L851.7 878.6 L853.2 878.7 L854.7 878.7 L856.2 878.7 L857.7 878.8 L859.2 878.8" stroke="#4a6fd6" stroke-width="2.5" fill="none" stroke-linejoin="round"/>
<path d="M868.2 878.8 L869.7 878.8 L871.2 878.8 L872.7 878.9 L874.2 878.9 L875.7 878.9 L877.3 878.9 L878.8 878.9 L880.3 878.9 L881.8 878.9 L883.3 878.9 L884.8 878.9 L886.3 879.0 L887.8 879.0 L889.3 879.0 L890.8 879.0 L892.4 879.0 L893.9 879.0 L895.4 879.0 L896.9 879.0 L898.4 879.0 L899.9 879.0 L901.4 879.0 L902.9 879.1 L904.4 879.1 L905.9 879.1 L907.4 879.1 L909.0 879.1 L910.5 879.1 L912.0 879.1 L913.5 879.1 L915.0 879.1 L916.5 879.2 L918.0 879.2 L919.5 879.2 L921.0 879.2 L922.5 879.2 L924.0 879.2 L925.6 879.3 L927.1 879.3 L928.6 879.3 L930.1 879.3 L931.6 879.4 L933.1 879.4 L934.6 879.4 L936.1 879.5 L937.6 879.5 L939.1 879.5 L940.7 879.6 L942.2 879.6 L943.7 879.7 L945.2 879.7 L946.7 879.8 L948.2 879.8 L950.2 880.6 L952.3 881.4 L953.8 881.5 L955.3 881.5 L956.8 881.6 L958.4 881.6 L959.9 881.7 L961.4 881.7 L962.9 881.8 L964.4 881.8 L965.9 881.8 L967.5 881.9 L969.0 881.9 L970.5 882.0 L972.0 882.0 L973.5 882.0 L975.0 882.1 L976.5 882.1 L978.1 882.1 L979.6 882.1 L981.1 882.2 L982.6 882.2 L984.1 882.2 L985.6 882.2 L987.1 882.3 L988.7 882.3 L990.2 882.3 L991.7 882.3 L993.2 882.3 L994.7 882.3 L996.2 882.3 L997.8 882.4 L999.3 882.4 L1000.8 882.4 L1002.3 882.4 L1003.8 882.4 L1005.3 882.4 L1006.8 882.4 L1008.4 882.4 L1009.9 882.4 L1011.4 882.4 L1012.9 882.4 L1014.4 882.4 L1015.9 882.5 L1017.5 882.5 L1019.0 882.5 L1020.5 882.5 L1022.0 882.5 L1023.5 882.5 L1025.0 882.5 L1026.5 882.5 L1028.1 882.5 L1029.6 882.5 L1031.1 882.5 L1032.6 882.5 L1034.1 882.5 L1035.6 882.5 L1037.2 882.5 L1038.7 882.5 L1040.2 882.5 L1041.7 882.5 L1043.2 882.6 L1044.7 882.6 L1046.2 882.6 L1047.8 882.6 L1049.3 882.6 L1050.8 882.6 L1052.3 882.6 L1053.8 882.6 L1055.3 882.6 L1056.8 882.7 L1058.4 882.7 L1059.9 882.7 L1061.4 882.7 L1062.9 882.7 L1064.4 882.8 L1065.9 882.8 L1067.5 882.8 L1069.0 882.8 L1070.5 882.9 L1072.0 882.9 L1073.5 882.9 L1075.0 882.9 L1076.5 883.0 L1078.1 883.0 L1079.6 883.0 L1081.1 883.1 L1082.6 883.1 L1084.1 883.2 L1085.6 883.2 L1087.2 883.3 L1088.7 883.3 L1090.2 883.3 L1091.7 883.4 L1093.4 883.6 L1095.0 883.9 L1096.7 884.3 L1098.3 884.6 L1100.0 884.7 L1101.5 884.7 L1103.0 884.7 L1104.5 884.8 L1106.0 884.8 L1107.5 884.8 L1109.0 884.8 L1110.5 884.8 L1112.0 884.9 L1113.5 884.9 L1115.1 884.9 L1116.6 884.9 L1118.1 884.9 L1119.6 884.9 L1121.1 884.9 L1122.6 884.9 L1124.1 885.0 L1125.6 885.0 L1127.1 885.0 L1128.6 885.0 L1130.1 885.0 L1131.6 885.0 L1133.1 885.0 L1134.6 885.0 L1136.1 885.0 L1137.6 885.0 L1139.1 885.0 L1140.6 885.0 L1142.1 885.0 L1143.6 885.1 L1145.2 885.1 L1146.7 885.1 L1148.2 885.1 L1149.7 885.1 L1151.2 885.1 L1152.7 885.1 L1154.2 885.1 L1155.7 885.1 L1157.2 885.1 L1158.7 885.1 L1160.2 885.1 L1161.7 885.1 L1163.2 885.1 L1164.7 885.1 L1166.2 885.1 L1167.7 885.1 L1169.2 885.1 L1170.7 885.1 L1172.2 885.1 L1173.8 885.1 L1175.3 885.1 L1176.8 885.1 L1178.3 885.1 L1179.8 885.1 L1181.3 885.1 L1182.8 885.1 L1184.3 885.1 L1185.8 885.1 L1187.3 885.1 L1188.8 885.1 L1190.3 885.1 L1191.8 885.1 L1193.3 885.1 L1194.8 885.1 L1196.3 885.1 L1197.8 885.1 L1199.3 885.1 L1200.8 885.1 L1202.4 885.2 L1203.9 885.2 L1205.4 885.2 L1206.9 885.2 L1208.4 885.2 L1209.9 885.2 L1211.4 885.2 L1212.9 885.2 L1214.4 885.2 L1215.9 885.2 L1217.4 885.2 L1218.9 885.2 L1220.4 885.2 L1221.9 885.2 L1223.4 885.3 L1224.9 885.3 L1226.4 885.3 L1227.9 885.3 L1229.4 885.3 L1230.9 885.3 L1232.5 885.3 L1234.0 885.4 L1235.5 885.4 L1237.0 885.4 L1238.5 885.4 L1240.0 885.4 L1241.5 885.4 L1243.0 885.5 L1244.5 885.5 L1246.0 885.5 L1247.7 885.6 L1249.4 885.9 L1251.2 886.2 L1252.9 886.6 L1254.6 886.9 L1256.3 887.0 L1257.8 887.0 L1259.3 887.1 L1260.8 887.1 L1262.3 887.2 L1263.8 887.2 L1265.3 887.3 L1266.9 887.3 L1268.4 887.3 L1269.9 887.4 L1271.4 887.4 L1272.9 887.4 L1274.4 887.5 L1275.9 887.5 L1277.4 887.5 L1278.9 887.6 L1280.4 887.6 L1281.9 887.6 L1283.4 887.7 L1284.9 887.7 L1286.5 887.7 L1288.0 887.8 L1289.5 887.8 L1291.0 887.8 L1292.5 887.8 L1294.0 887.9 L1295.5 887.9 L1297.0 887.9 L1298.5 887.9 L1300.0 888.0 L1301.5 888.0 L1303.0 888.0 L1304.5 888.0 L1306.1 888.0 L1307.6 888.1 L1309.1 888.1 L1310.6 888.1 L1312.1 888.1 L1313.6 888.1 L1315.1 888.1 L1316.6 888.2 L1318.1 888.2 L1319.6 888.2 L1321.1 888.2 L1322.6 888.2 L1324.1 888.2 L1325.7 888.2 L1327.2 888.2 L1328.7 888.3 L1330.2 888.3 L1331.7 888.3 L1333.2 888.3 L1334.7 888.3 L1336.2 888.3 L1337.7 888.3 L1339.2 888.3 L1340.7 888.3 L1342.2 888.3 L1343.7 888.4 L1345.3 888.4 L1346.8 888.4 L1348.3 888.4 L1349.8 888.4 L1351.3 888.4 L1352.8 888.4 L1354.3 888.4 L1355.8 888.4 L1357.3 888.4 L1358.8 888.4 L1360.3 888.4 L1361.8 888.4 L1363.3 888.4 L1364.9 888.4 L1366.4 888.4 L1367.9 888.5 L1369.4 888.5 L1370.9 888.5 L1372.4 888.5 L1373.9 888.5 L1375.4 888.5 L1376.9 888.5 L1378.4 888.5 L1379.9 888.5 L1381.4 888.5 L1382.9 888.5 L1384.4 888.5 L1386.0 888.5 L1387.5 888.5 L1389.0 888.5 L1390.5 888.5 L1392.0 888.5 L1393.5 888.5 L1395.0 888.5 L1396.5 888.5 L1398.0 888.5 L1399.5 888.5 L1401.0 888.5 L1402.5 888.6 L1404.0 888.6 L1405.6 888.6 L1407.1 888.6 L1408.6 888.6 L1410.1 888.6 L1411.6 888.6 L1413.1 888.6 L1414.6 888.6 L1416.1 888.6 L1417.6 888.6 L1419.1 888.6 L1420.6 888.6 L1422.1 888.6 L1423.6 888.6 L1425.2 888.7 L1426.7 888.7 L1428.2 888.7 L1429.7 888.7 L1431.2 888.7 L1432.7 888.7 L1434.2 888.7 L1435.7 888.7 L1437.2 888.7 L1438.7 888.7 L1440.2 888.8 L1441.7 888.8 L1443.2 888.8 L1444.8 888.8 L1446.3 888.8 L1447.8 888.8 L1449.3 888.8 L1450.8 888.9 L1452.3 888.9 L1453.8 888.9 L1455.3 888.9 L1456.8 888.9 L1458.3 888.9 L1459.8 889.0 L1461.3 889.0 L1462.8 889.0 L1464.4 889.0 L1465.9 889.0 L1467.4 889.1 L1468.9 889.1 L1470.4 889.1 L1471.9 889.1 L1473.4 889.2 L1474.9 889.2 L1476.4 889.2 L1477.9 889.2 L1479.4 889.3 L1480.9 889.3 L1482.4 889.3 L1484.0 889.4 L1485.5 889.4 L1487.0 889.4 L1488.5 889.5 L1490.0 889.5 L1491.5 889.5 L1493.0 889.6 L1494.5 889.6 L1496.0 889.6 L1497.5 889.7 L1499.0 889.7 L1500.5 889.7 L1502.0 889.8 L1503.6 889.8 L1505.1 889.9 L1506.6 889.9 L1508.1 890.0 L1509.6 890.0 L1511.1 890.1 L1512.6 890.1 L1514.3 890.4 L1516.0 890.9 L1517.7 891.1 L1519.2 891.1 L1520.7 891.1 L1522.2 891.1 L1523.8 891.1 L1525.3 891.1 L1526.8 891.1 L1528.3 891.1 L1529.8 891.1 L1531.3 891.1 L1532.8 891.1 L1534.3 891.1 L1535.9 891.1 L1537.4 891.1 L1538.9 891.1 L1540.4 891.1 L1541.9 891.1 L1543.4 891.1 L1544.9 891.1 L1546.4 891.1 L1548.0 891.1 L1549.5 891.0 L1551.0 891.0 L1552.5 891.0 L1554.0 891.0 L1555.5 891.0 L1557.0 891.0 L1558.5 891.0 L1560.1 891.0 L1561.6 891.0 L1563.1 891.0 L1564.6 891.0 L1566.1 891.0 L1567.6 891.0 L1569.1 891.0 L1570.6 891.0 L1572.2 891.0 L1573.7 891.0 L1575.2 891.0 L1576.7 891.0 L1578.2 891.0 L1579.7 891.0 L1581.2 891.0 L1582.7 890.9 L1584.3 890.9 L1585.8 890.9 L1587.3 890.9 L1588.8 890.9 L1590.3 890.9 L1591.8 890.9 L1593.3 890.9 L1594.8 890.9 L1596.4 890.9 L1597.9 890.9 L1599.4 890.9 L1600.9 890.9 L1602.4 890.9 L1603.9 890.9 L1605.4 890.9 L1606.9 890.9 L1608.5 890.9 L1610.0 890.9 L1611.5 890.9 L1613.0 890.9 L1615.0 891.2 L1616.9 891.8 L1618.9 892.6 L1620.7 893.4 L1622.4 894.3 L1624.2 895.4 L1625.9 896.6 L1627.5 897.9 L1629.0 899.5 L1630.6 900.6 L1632.8 901.6 L1635.0 902.2 L1637.0 902.5 L1638.9 902.6 L1640.5 902.3 L1642.0 901.7 L1643.6 900.8 L1645.6 899.2 L1647.5 897.0 L1649.5 894.3 L1651.2 891.4 L1653.0 887.9 L1654.8 884.0 L1656.5 880.1 L1658.3 875.9 L1660.0 871.4 L1661.8 866.9 L1663.6 862.5 L1665.4 858.3 L1667.2 854.3 L1668.9 850.2 L1670.7 846.0 L1672.5 841.6 L1674.2 837.0 L1676.0 832.5 L1677.7 828.3 L1679.7 823.9 L1681.6 819.9 L1683.6 816.6 L1685.6 813.9 L1687.5 811.7 L1689.5 810.2 L1691.3 809.3 L1693.0 808.6 L1694.8 808.1 L1696.6 807.8 L1698.2 807.7 L1699.7 807.6 L1701.3 807.5 L1702.9 807.4 L1704.4 807.3 L1706.0 807.3 L1707.6 807.2 L1709.1 807.2 L1710.7 807.1 L1712.3 807.1 L1713.8 807.0 L1715.4 807.0 L1717.0 807.0 L1718.5 806.9 L1720.1 806.9 L1721.7 806.9 L1723.2 806.9 L1724.8 806.9 L1726.3 806.9 L1727.8 806.9 L1729.4 806.9 L1730.9 806.9 L1732.4 806.9 L1733.9 806.9 L1735.4 806.9 L1737.0 806.9 L1738.5 806.9 L1740.0 807.0 L1741.5 807.0 L1743.0 807.0 L1744.6 807.0 L1746.1 807.0 L1747.6 807.0 L1749.1 807.1 L1750.6 807.1 L1752.1 807.1 L1753.7 807.1 L1755.2 807.1 L1756.7 807.2 L1758.2 807.2 L1759.7 807.2 L1761.3 807.3 L1762.8 807.3 L1764.3 807.4 L1765.8 807.4 L1767.3 807.4 L1768.9 807.5 L1770.4 807.5 L1771.9 807.6 L1773.9 807.9 L1775.8 808.5 L1777.8 808.8 L1779.3 808.8 L1780.8 808.9 L1782.3 808.9 L1783.8 808.9 L1785.3 808.9 L1786.8 808.9 L1788.3 809.0 L1789.8 809.0 L1791.3 809.0 L1792.8 809.0 L1794.3 809.0 L1795.8 809.1 L1797.3 809.1 L1798.8 809.1 L1800.3 809.1 L1801.8 809.1 L1803.3 809.1 L1804.9 809.1 L1806.4 809.2 L1807.9 809.2 L1809.4 809.2 L1810.9 809.2 L1812.4 809.2 L1813.9 809.2 L1815.4 809.2 L1816.9 809.2 L1818.4 809.2 L1819.9 809.2 L1821.4 809.2 L1822.9 809.3 L1824.4 809.3 L1825.9 809.3 L1827.4 809.3 L1828.9 809.3 L1830.4 809.3 L1831.9 809.3 L1833.4 809.3 L1834.9 809.3 L1836.4 809.3 L1837.9 809.3 L1839.4 809.3 L1840.9 809.3 L1842.4 809.3 L1843.9 809.3 L1845.4 809.3 L1846.9 809.3 L1848.4 809.3 L1849.9 809.3 L1851.4 809.3 L1852.9 809.4 L1854.5 809.4 L1856.0 809.4 L1857.5 809.4 L1859.0 809.4 L1860.5 809.4 L1862.0 809.4 L1863.5 809.4 L1865.0 809.4 L1866.5 809.4 L1868.0 809.4 L1869.5 809.4 L1871.0 809.4 L1872.5 809.4 L1874.0 809.5 L1875.5 809.5 L1877.0 809.5 L1878.5 809.5 L1880.0 809.5 L1881.5 809.5 L1883.0 809.5 L1884.5 809.5 L1886.0 809.5 L1887.5 809.6 L1889.0 809.6 L1890.5 809.6 L1892.0 809.6 L1893.5 809.6 L1895.0 809.6 L1896.5 809.6 L1898.0 809.6 L1899.5 809.6 L1901.0 809.7 L1902.5 809.7 L1904.0 809.7 L1905.5 809.7 L1907.0 809.7 L1908.5 809.7 L1910.0 809.7 L1911.5 809.7 L1913.0 809.7 L1914.5 809.7 L1916.0 809.7 L1917.5 809.7 L1919.1 809.8 L1920.6 809.8 L1922.1 809.8 L1923.6 809.8 L1925.1 809.8 L1926.6 809.8 L1928.1 809.8 L1929.6 809.8 L1931.1 809.8 L1932.6 809.8 L1934.1 809.8 L1935.6 809.8 L1937.1 809.9 L1938.6 809.9 L1940.1 809.9 L1941.6 809.9 L1943.1 809.9 L1944.6 809.9 L1946.1 809.9 L1947.6 809.9 L1949.1 809.9 L1950.6 809.9 L1952.1 810.0 L1953.6 810.0 L1955.1 810.0 L1956.6 810.0 L1958.1 810.0 L1959.6 810.0 L1961.1 810.0 L1962.6 810.0 L1964.1 810.1 L1965.6 810.1 L1967.1 810.1 L1968.6 810.1 L1970.1 810.1 L1971.6 810.1 L1973.1 810.1 L1974.6 810.2 L1976.1 810.2 L1977.6 810.2 L1979.1 810.2 L1980.6 810.2 L1982.1 810.3 L1983.6 810.3 L1985.1 810.3 L1986.6 810.3 L1988.1 810.3 L1989.6 810.4 L1991.1 810.4 L1992.7 810.4 L1994.2 810.4 L1995.7 810.5 L1997.2 810.5 L1998.7 810.5 L2000.2 810.5 L2001.7 810.6 L2003.2 810.6 L2004.7 810.6 L2006.2 810.6 L2007.7 810.7 L2009.2 810.7 L2010.7 810.7 L2012.2 810.8 L2013.7 810.8 L2015.2 810.8 L2016.7 810.9 L2018.2 810.9 L2019.7 810.9 L2021.2 811.0 L2022.7 811.0 L2024.2 811.0 L2025.7 811.1 L2027.2 811.1 L2028.7 811.2 L2030.2 811.2 L2031.9 811.3 L2033.6 811.6 L2035.3 812.0 L2037.1 812.3 L2038.8 812.6 L2040.5 812.7 L2042.0 812.7 L2043.5 812.7 L2045.0 812.8 L2046.5 812.8 L2048.0 812.8 L2049.5 812.8 L2051.0 812.8 L2052.5 812.9 L2054.0 812.9 L2055.5 812.9 L2057.0 812.9 L2058.5 812.9 L2060.0 813.0 L2061.5 813.0 L2063.0 813.0 L2064.5 813.0 L2066.0 813.0 L2067.5 813.0 L2069.0 813.1 L2070.5 813.1 L2072.0 813.1 L2073.5 813.1 L2075.0 813.1 L2076.5 813.1 L2078.1 813.2 L2079.6 813.2 L2081.1 813.2 L2082.6 813.2 L2084.1 813.2 L2085.6 813.2 L2087.1 813.2 L2088.6 813.2 L2090.1 813.3 L2091.6 813.3 L2093.1 813.3 L2094.6 813.3 L2096.1 813.3 L2097.6 813.3 L2099.1 813.3 L2100.6 813.3 L2102.1 813.4 L2103.6 813.4 L2105.1 813.4 L2106.6 813.4 L2108.1 813.4 L2109.6 813.4 L2111.1 813.4 L2112.6 813.4 L2114.1 813.4 L2115.6 813.4 L2117.1 813.4 L2118.6 813.5 L2120.1 813.5 L2121.6 813.5 L2123.1 813.5 L2124.6 813.5 L2126.1 813.5 L2127.6 813.5 L2129.1 813.5 L2130.6 813.5 L2132.1 813.5 L2133.6 813.5 L2135.1 813.5 L2136.6 813.5 L2138.1 813.5 L2139.6 813.5 L2141.1 813.5 L2142.6 813.6 L2144.1 813.6 L2145.6 813.6 L2147.1 813.6 L2148.6 813.6 L2150.1 813.6 L2151.7 813.6 L2153.2 813.6 L2154.7 813.6 L2156.2 813.6 L2157.7 813.6 L2159.2 813.6 L2160.7 813.6 L2162.2 813.6 L2163.7 813.6 L2165.2 813.6 L2166.7 813.6 L2168.2 813.6 L2169.7 813.6 L2171.2 813.6 L2172.7 813.6 L2174.2 813.6 L2175.7 813.6 L2177.2 813.6 L2178.7 813.6 L2180.2 813.6 L2181.7 813.6 L2183.2 813.6 L2184.7 813.6 L2186.2 813.7 L2187.7 813.7 L2189.2 813.7 L2190.7 813.7 L2192.2 813.7 L2193.7 813.7 L2195.2 813.7 L2196.7 813.7 L2198.2 813.7 L2199.7 813.7 L2201.2 813.7 L2202.7 813.7 L2204.2 813.7 L2205.7 813.7 L2207.2 813.7 L2208.7 813.7 L2210.2 813.7 L2211.7 813.7 L2213.2 813.7 L2214.7 813.7 L2216.2 813.7 L2217.7 813.7 L2219.2 813.7 L2220.7 813.7 L2222.2 813.7 L2223.7 813.7 L2225.2 813.7 L2226.8 813.7 L2228.3 813.7 L2229.8 813.7 L2231.3 813.7 L2232.8 813.7 L2234.3 813.7 L2235.8 813.7 L2237.3 813.7 L2238.8 813.7 L2240.3 813.7 L2241.8 813.7 L2243.3 813.7 L2244.8 813.7 L2246.3 813.7 L2247.8 813.7 L2249.3 813.7 L2250.8 813.7 L2252.3 813.7 L2253.8 813.7 L2255.3 813.7 L2256.8 813.7 L2258.3 813.7 L2259.8 813.7 L2261.3 813.7 L2262.8 813.7 L2264.3 813.7 L2265.8 813.7 L2267.3 813.7 L2268.8 813.7 L2270.3 813.7 L2271.8 813.7 L2273.3 813.7 L2274.8 813.7 L2276.3 813.7 L2277.8 813.7 L2279.3 813.7 L2280.8 813.7 L2282.3 813.7 L2283.8 813.8 L2285.3 813.8 L2286.8 813.8 L2288.3 813.8 L2289.8 813.8 L2291.3 813.8 L2292.8 813.8 L2294.3 813.8 L2295.8 813.8 L2297.3 813.8 L2298.8 813.8 L2300.4 813.8 L2301.9 813.8 L2303.4 813.8 L2304.9 813.8 L2306.4 813.8 L2307.9 813.8 L2309.4 813.8 L2310.9 813.8 L2312.4 813.8 L2313.9 813.8 L2315.4 813.8 L2316.9 813.9 L2318.4 813.9 L2319.9 813.9 L2321.4 813.9 L2322.9 813.9 L2324.4 813.9 L2325.9 813.9 L2327.4 813.9 L2328.9 813.9 L2330.4 813.9 L2331.9 813.9 L2333.4 813.9 L2334.9 813.9 L2336.4 814.0 L2337.9 814.0 L2339.4 814.0 L2340.9 814.0 L2342.4 814.0 L2343.9 814.0 L2345.4 814.0 L2346.9 814.0 L2348.4 814.0 L2349.9 814.0 L2351.4 814.1 L2352.9 814.1 L2354.4 814.1 L2355.9 814.1 L2357.4 814.1 L2358.9 814.1 L2360.4 814.1 L2361.9 814.1 L2363.4 814.2 L2364.9 814.2 L2366.4 814.2 L2367.9 814.2 L2369.4 814.2 L2370.9 814.2 L2372.4 814.2 L2374.0 814.3 L2375.5 814.3 L2377.0 814.3 L2378.5 814.3 L2380.0 814.3 L2381.5 814.3 L2383.0 814.3 L2384.5 814.4 L2386.0 814.4 L2387.5 814.4 L2389.0 814.4 L2390.5 814.4 L2392.0 814.5 L2393.5 814.5 L2395.0 814.5 L2396.5 814.5 L2398.0 814.5 L2399.5 814.5 L2401.0 814.6 L2402.5 814.6 L2404.0 814.6 L2405.5 814.6 L2407.0 814.7 L2408.5 814.7 L2410.0 814.7 L2411.5 814.9 L2413.1 815.2 L2414.6 815.7 L2416.2 816.0 L2417.7 816.2 L2419.2 816.2 L2420.7 816.2 L2422.2 816.3 L2423.7 816.3 L2425.2 816.3 L2426.7 816.3 L2428.2 816.3 L2429.7 816.3 L2431.2 816.4 L2432.7 816.4 L2434.3 816.4 L2435.8 816.4 L2437.3 816.4 L2438.8 816.4 L2440.3 816.4 L2441.8 816.5 L2443.3 816.5 L2444.8 816.5 L2446.3 816.5 L2447.8 816.5 L2449.3 816.5 L2450.8 816.5 L2452.3 816.5 L2453.8 816.5 L2455.3 816.5 L2456.8 816.6 L2458.3 816.6 L2459.8 816.6 L2461.3 816.6 L2462.8 816.6 L2464.4 816.6 L2465.9 816.6 L2467.4 816.6 L2468.9 816.6 L2470.4 816.6 L2471.9 816.6 L2473.4 816.6 L2474.9 816.6 L2476.4 816.6 L2477.9 816.6 L2479.4 816.7 L2480.9 816.7 L2482.4 816.7 L2483.9 816.7 L2485.4 816.7 L2486.9 816.7 L2488.4 816.7 L2489.9 816.7 L2491.4 816.7 L2492.9 816.7 L2494.4 816.7 L2496.0 816.7 L2497.5 816.7 L2499.0 816.7 L2500.5 816.7 L2502.0 816.7 L2503.5 816.7 L2505.0 816.7 L2506.5 816.7 L2508.0 816.7 L2509.5 816.7 L2511.0 816.7 L2512.5 816.7 L2514.0 816.7 L2515.5 816.7 L2517.0 816.7 L2518.5 816.7 L2520.0 816.7 L2521.5 816.7 L2523.0 816.7 L2524.5 816.7 L2526.1 816.7 L2527.6 816.7 L2529.1 816.7 L2530.6 816.7 L2532.1 816.7 L2533.6 816.7 L2535.1 816.7 L2536.6 816.7 L2538.1 816.7 L2539.6 816.7 L2541.1 816.7 L2542.6 816.7 L2544.1 816.7 L2545.6 816.7 L2547.1 816.7 L2548.6 816.7 L2550.1 816.7 L2551.6 816.7 L2553.1 816.8 L2554.6 816.8 L2556.2 816.8 L2557.7 816.8 L2559.2 816.8 L2560.7 816.8 L2562.2 816.8 L2563.7 816.8 L2565.2 816.8 L2566.7 816.8 L2568.2 816.8 L2569.7 816.8 L2571.2 816.8 L2572.7 816.8 L2574.2 816.8 L2575.7 816.8 L2577.2 816.8 L2578.7 816.8 L2580.2 816.8 L2581.7 816.8 L2583.2 816.8 L2584.7 816.8 L2586.2 816.8 L2587.8 816.8 L2589.3 816.9 L2590.8 816.9 L2592.3 816.9 L2593.8 816.9 L2595.3 816.9 L2596.8 816.9 L2598.3 816.9 L2599.8 816.9 L2601.3 816.9 L2602.8 816.9 L2604.3 816.9 L2605.8 816.9 L2607.3 817.0 L2608.8 817.0 L2610.3 817.0 L2611.8 817.0 L2613.3 817.0 L2614.8 817.0 L2616.3 817.0 L2617.9 817.0 L2619.4 817.1 L2620.9 817.1 L2622.4 817.1 L2623.9 817.1 L2625.4 817.1 L2626.9 817.1 L2628.4 817.1 L2629.9 817.2 L2631.4 817.2 L2632.9 817.2 L2634.5 817.2 L2636.2 817.3 L2637.8 817.4 L2639.5 817.6 L2641.1 817.8 L2642.8 818.7 L2644.6 820.5 L2646.3 822.4 L2647.9 823.9 L2649.5 825.4 L2651.0 827.0 L2652.6 828.6 L2654.2 830.3 L2655.8 832.0 L2657.4 833.7 L2658.9 835.5 L2660.5 837.4 L2662.1 839.5 L2663.8 841.8 L2665.4 844.2 L2667.0 846.9 L2668.7 850.0 L2670.4 853.7 L2672.2 858.0 L2673.9 863.2 L2675.9 871.1 L2677.9 881.6 L2680.5 902.6 L2683.2 931.6 L2685.8 963.2 L2688.4 989.5 L2690.0 1003.6 L2691.6 1015.8 L2693.2 1025.9 L2694.7 1034.8 L2696.3 1042.1 L2698.3 1049.4 L2700.3 1055.3 L2702.6 1060.6 L2704.2 1062.4 L2706.0 1061.2 L2707.8 1059.2 L2709.5 1056.6 L2711.2 1053.2 L2713.0 1049.1 L2714.7 1044.7 L2716.3 1040.4 L2718.0 1035.9 L2719.7 1031.2 L2721.3 1026.3 L2723.0 1021.4 L2724.6 1016.3 L2726.2 1011.0 L2727.9 1005.3 L2729.6 999.1 L2731.2 992.5 L2732.8 985.6 L2734.5 978.9 L2736.2 972.3 L2737.8 965.8 L2739.4 959.2 L2741.1 952.6 L2742.7 946.0 L2744.3 939.3 L2746.0 932.7 L2747.6 926.3 L2749.2 920.1 L2750.9 914.0 L2752.5 908.2 L2754.2 902.6 L2755.8 897.5 L2757.4 892.7 L2758.9 888.0 L2760.5 883.4 L2762.1 878.9 L2763.7 874.5 L2765.3 870.3 L2766.8 866.1 L2768.4 862.0 L2770.0 857.9 L2771.6 853.7 L2773.2 849.5 L2774.7 845.3 L2776.3 841.5 L2777.9 838.2 L2779.5 835.4 L2781.1 832.8 L2782.6 830.4 L2784.2 828.3 L2785.8 826.3 L2787.4 824.4 L2789.0 822.6 L2790.5 820.9 L2792.1 819.5 L2793.7 818.4 L2795.2 817.6 L2796.7 816.9 L2798.2 816.2 L2799.7 815.6 L2801.2 815.1 L2802.7 814.8 L2804.2 814.5 L2805.7 814.3 L2807.3 814.1 L2808.8 813.9 L2810.4 813.7 L2811.9 813.6 L2813.5 813.4 L2815.0 813.3 L2816.6 813.2 L2818.1 813.1 L2819.7 812.9 L2821.2 812.9 L2822.8 812.8 L2824.3 812.7 L2825.9 812.7 L2827.4 812.6 L2829.0 812.6 L2830.5 812.6 L2832.0 812.6 L2833.5 812.6 L2835.1 812.6 L2836.6 812.6 L2838.1 812.6 L2839.6 812.6 L2841.1 812.6 L2842.7 812.6 L2844.2 812.7 L2845.7 812.7 L2847.2 812.7 L2848.7 812.7 L2850.2 812.7 L2851.8 812.8 L2853.3 812.8 L2854.8 812.8 L2856.3 812.8 L2857.8 812.9 L2859.4 812.9 L2860.9 812.9 L2862.4 813.0 L2863.9 813.0 L2865.4 813.1 L2867.0 813.1 L2868.5 813.2 L2870.0 813.2 L2871.5 813.3 L2873.1 813.6 L2874.6 814.0 L2876.1 814.3 L2877.7 814.6 L2879.2 814.7 L2880.7 814.7 L2882.2 814.7 L2883.7 814.7 L2885.3 814.7 L2886.8 814.7 L2888.3 814.7 L2889.8 814.7 L2891.3 814.8 L2892.8 814.8 L2894.3 814.8 L2895.8 814.8 L2897.4 814.8 L2898.9 814.8 L2900.4 814.8 L2901.9 814.8 L2903.4 814.8 L2904.9 814.8 L2906.4 814.8 L2907.9 814.8 L2909.5 814.8 L2911.0 814.8 L2912.5 814.8 L2914.0 814.8 L2915.5 814.8 L2917.0 814.8 L2918.5 814.8 L2920.0 814.8 L2921.6 814.8 L2923.1 814.8 L2924.6 814.8 L2926.1 814.8 L2927.6 814.8 L2929.1 814.8 L2930.6 814.8 L2932.2 814.8 L2933.7 814.8 L2935.2 814.8 L2936.7 814.8 L2938.2 814.8 L2939.7 814.8 L2941.2 814.8 L2942.7 814.8 L2944.3 814.8 L2945.8 814.8 L2947.3 814.8 L2948.8 814.8 L2950.3 814.8 L2951.8 814.8 L2953.3 814.8 L2954.8 814.8 L2956.4 814.8 L2957.9 814.8 L2959.4 814.8 L2960.9 814.8 L2962.4 814.8 L2963.9 814.9 L2965.4 814.9 L2966.9 814.9 L2968.5 814.9 L2970.0 814.9 L2971.5 814.9 L2973.0 814.9 L2974.6 815.3 L2976.1 816.2 L2977.7 816.6 L2979.2 816.6 L2980.8 816.6 L2982.3 816.6 L2983.8 816.6 L2985.4 816.6 L2986.9 816.6 L2988.5 816.6 L2990.0 816.6 L2991.5 816.6 L2993.1 816.6 L2994.6 816.6 L2996.1 816.6 L2997.7 816.6 L2999.2 816.6 L3000.7 816.6 L3002.3 816.6 L3003.8 816.6 L3005.3 816.6 L3006.9 816.6 L3008.4 816.6 L3010.0 816.6 L3011.5 816.6 L3013.0 816.6 L3014.6 816.6 L3016.1 816.6 L3017.6 816.6 L3019.2 816.6 L3020.7 816.6 L3022.2 816.6 L3023.8 816.6 L3025.3 816.6 L3026.9 816.6 L3028.4 816.6 L3029.9 816.6 L3031.5 816.6 L3033.0 816.6 L3034.6 816.6 L3036.2 816.8 L3037.8 816.9 L3039.4 817.2 L3041.1 817.4 L3042.7 817.5 L3044.3 817.7 L3045.9 817.7 L3047.6 817.3 L3049.2 816.2 L3050.9 814.8 L3052.5 813.3 L3054.2 811.9 L3055.8 810.8 L3057.3 809.7 L3058.9 808.6 L3060.5 807.5 L3062.0 806.2 L3063.6 804.8 L3065.4 802.8 L3067.1 800.5 L3068.9 797.9 L3070.7 795.4 L3072.3 793.2 L3073.8 790.8 L3075.4 788.5 L3077.0 786.1 L3078.5 783.7 L3080.1 781.3 L3081.7 779.0 L3083.2 776.6 L3084.8 774.3 L3086.4 772.0 L3087.9 769.7 L3089.5 767.4 L3091.1 765.0 L3092.6 762.6 L3094.2 760.1 L3095.9 757.4 L3097.6 754.6 L3099.3 751.7 L3100.9 748.8 L3102.6 745.9 L3104.3 743.0 L3106.0 740.1 L3107.8 737.1 L3109.5 734.0 L3111.2 731.0 L3113.0 728.3 L3114.6 726.1 L3116.1 724.0 L3117.7 722.0 L3119.3 720.1 L3120.8 718.4 L3122.4 717.0 L3123.9 715.7 L3125.4 714.5 L3126.9 713.4 L3128.5 712.4 L3130.0 711.5 L3131.5 710.7 L3133.0 710.2 L3134.6 709.7 L3136.2 709.3 L3137.9 708.9 L3139.5 708.6 L3141.1 708.3 L3142.8 708.0 L3144.4 707.9 L3146.0 707.8 L3147.5 707.8 L3149.0 707.7 L3150.5 707.7 L3152.0 707.7 L3153.5 707.6 L3155.0 707.6 L3156.5 707.6 L3158.0 707.5 L3159.5 707.5 L3161.0 707.5 L3162.5 707.5 L3164.0 707.4 L3165.5 707.4 L3167.0 707.4 L3168.5 707.4 L3170.0 707.4 L3171.5 707.3 L3173.0 707.3 L3174.5 707.3 L3176.0 707.3 L3177.5 707.3 L3179.0 707.3 L3180.5 707.2 L3182.1 707.2 L3183.6 707.2 L3185.1 707.2 L3186.6 707.2 L3188.1 707.2 L3189.6 707.2 L3191.1 707.2 L3192.6 707.2 L3194.1 707.2 L3195.6 707.1 L3197.1 707.1 L3198.6 707.1 L3200.1 707.1 L3201.6 707.1 L3203.1 707.1 L3204.6 707.1 L3206.1 707.1 L3207.6 707.1 L3209.1 707.1 L3210.6 707.1 L3212.1 707.1 L3213.6 707.1 L3215.1 707.1 L3216.6 707.1 L3218.1 707.1 L3219.6 707.1 L3221.2 707.1 L3222.7 707.1 L3224.2 707.1 L3225.7 707.1 L3227.2 707.1 L3228.7 707.2 L3230.3 707.2 L3231.8 707.2 L3233.3 707.2 L3234.8 707.2 L3236.3 707.2 L3237.8 707.2 L3239.4 707.3 L3240.9 707.3 L3242.4 707.3 L3243.9 707.3 L3245.4 707.4 L3246.9 707.4 L3248.5 707.4 L3250.0 707.4 L3251.5 707.5 L3253.0 707.5 L3254.5 707.5 L3256.0 707.5 L3257.6 707.6 L3259.1 707.6 L3260.6 707.6 L3262.1 707.7 L3263.6 707.7 L3265.1 707.7 L3266.7 707.7 L3268.2 707.8 L3269.7 707.8 L3271.2 707.8 L3272.7 707.9 L3274.2 707.9 L3275.8 707.9 L3277.3 708.0 L3278.8 708.0 L3280.3 708.0 L3281.8 708.0 L3283.3 708.1 L3284.9 708.1 L3286.4 708.1 L3287.9 708.2 L3289.4 708.2 L3290.9 708.2 L3292.4 708.2 L3294.0 708.3 L3295.5 708.3 L3297.0 708.3" stroke="#4a6fd6" stroke-width="2.5" fill="none" stroke-linejoin="round"/>
<path d="M316.3 993.0 L352.0 993.0 L358.0 992.1 V991.6 L414.0 992.4 L420.0 993.5 V994.0 L430.0 993.5 V993.2 L440.0 994.1 V994.6 L690.0 998.0 L700.0 999.0 V999.5 L730.0 999.6 L742.0 998.0 V997.2 L748.0 998.3 V998.8 L812.0 1000.0 L820.0 1000.8 V1001.2 L859.2 1000.6" stroke="#f2bb4b" stroke-width="2.5" fill="none" stroke-linejoin="round"/>
<path d="M868.2 1000.6 L895.0 1001.3 V1001.6 L900.0 1002.5 V1003.0 L905.0 1001.8 V1001.2 L910.0 1002.5 V1003.2 L1000.0 1003.5 L1080.0 1004.6 L1090.0 1005.5 V1006.0 L1100.0 1005.2 V1004.8 L1180.0 1006.5 L1275.0 1009.0 L1285.0 1008.3 V1008.0 L1362.0 1010.0 L1500.0 1011.2 L1602.4 1011.5 L1604.7 1012.1 V1012.4 H1606.5 V1008.5 H1608.3 L1609.0 899.0 L1610.6 899.0 L1611.1 927.2 H1612.1 V931.4 H1613.2 H1614.2 V935.5 H1615.3 H1616.5 V940.2 H1617.7 H1618.8 V944.9 H1620.0 L1623.6 944.9 H1624.5 V940.2 H1625.3 H1626.2 V935.5 H1627.1 H1627.7 V928.4 H1628.3 H1628.9 V921.3 H1629.5 H1630.1 V916.6 H1630.7 H1631.2 V911.9 H1631.8 H1632.4 V907.2 H1633.0 H1633.6 V902.5 H1634.2 L1635.3 886.0 H1635.9 V877.8 H1636.5 H1637.1 V869.5 H1637.7 H1638.3 V863.2 H1638.9 H1639.5 V857.0 H1640.0 H1640.6 V850.7 H1641.2 H1641.8 V841.3 H1642.4 H1643.0 V831.9 H1643.6 H1644.3 V824.8 H1645.1 H1645.8 V817.7 H1646.6 H1647.3 V809.5 H1648.0 H1648.8 V801.2 H1649.5 H1650.4 V796.5 H1651.2 H1652.1 V791.8 H1653.0 H1653.6 V787.1 H1654.2 H1654.8 V782.4 H1655.3 H1655.9 V777.7 H1656.5 H1657.3 V773.0 H1658.1 H1658.8 V768.3 H1659.6 H1660.4 V763.6 H1661.2 H1662.7 V757.7 H1664.2 H1665.6 V751.8 H1667.1 H1668.6 V747.1 H1670.0 H1671.5 V742.4 H1673.0 L1678.2 742.1 V741.9 L1678.7 761.2 H1679.3 V768.2 H1680.0 H1680.7 V775.3 H1681.3 H1681.9 V780.8 H1682.5 H1683.0 V786.3 H1683.6 H1684.2 V791.8 H1684.8 H1685.5 V796.5 H1686.2 H1686.9 V801.3 H1687.6 H1688.3 V806.0 H1689.0 H1690.0 V811.3 H1691.0 H1692.0 V816.6 H1693.0 H1694.5 V820.1 H1696.0 H1697.4 V823.6 H1698.9 L1708.3 827.5 V829.5 L1720.1 832.9 V834.7 L1731.5 837.9 V839.6 L1743.7 843.0 V844.8 L1759.2 849.5 V851.9 L1771.9 855.8 V857.8 L1781.2 860.3 V861.5 L1795.5 865.3 V867.2 L1812.2 871.8 V874.2 L1819.0 876.1 V877.1 L1832.9 880.6 V882.4 L1842.6 884.8 V886.0 L1851.7 888.3 V889.5 L1866.1 893.1 V895.0 L1880.0 898.1 V899.7 L1890.5 902.0 V903.1 L1901.5 905.5 V906.7 L1910.7 908.7 V909.7 L1923.4 912.5 V913.9 L1929.3 915.1 V915.8 L1955.1 920.1 V922.3 L1973.9 925.4 V927.0 L1996.9 930.6 V932.5 L2025.1 937.0 V939.3 L2051.2 943.7 V946.0 L2071.6 948.8 V950.2 L2089.5 952.7 V953.9 L2102.5 955.7 V956.6 L2130.4 959.6 V961.1 L2153.7 963.5 V964.8 L2177.6 967.0 V968.1 L2198.8 970.0 V971.0 L2216.0 972.4 V973.2 L2234.1 974.7 V975.5 L2256.2 977.3 V978.3 L2280.9 980.0 V980.8 L2307.5 982.6 V983.5 L2333.4 985.0 V985.7 L2358.7 987.2 V987.9 L2386.1 989.3 V990.0 L2410.0 991.2 V991.8 L2424.0 992.3 V992.6 L2440.9 993.3 V993.6 L2466.3 994.6 V995.1 L2486.9 995.7 V996.1 L2512.5 996.9 V997.3 L2532.1 997.9 V998.2 L2547.1 998.7 V998.9 L2563.7 999.4 V999.7 L2588.6 1000.4 V1000.8 L2606.4 1001.3 V1001.5 L2614.9 1001.8 V1001.9 L2638.9 1002.9 V1003.4 H2639.7 V1000.0 H2640.5 L2651.6 998.3 V997.4 L2662.1 994.4 V992.9 L2672.6 990.7 V989.5 L2681.8 988.1 V987.4 H2682.9 V982.9 H2683.9 L2685.0 878.9 L2687.4 878.9 L2687.9 932.9 H2688.7 V934.2 H2689.5 L2690.0 952.6 H2690.8 V957.2 H2691.6 H2692.4 V961.8 H2693.2 H2694.3 V964.0 H2695.4 H2696.5 V966.3 H2697.6 L2701.6 966.0 V965.8 H2703.1 V959.2 H2704.7 H2705.4 V952.7 H2706.1 H2706.9 V946.1 H2707.6 H2708.4 V938.9 H2709.2 H2710.0 V931.6 H2710.8 H2711.5 V925.0 H2712.1 H2712.8 V918.4 H2713.4 H2714.4 V900.0 H2715.3 H2716.0 V895.4 H2716.6 H2717.2 V890.8 H2717.9 H2718.7 V871.1 H2719.5 H2720.3 V864.5 H2721.1 H2721.8 V857.9 H2722.6 H2723.2 V852.6 H2723.8 H2724.3 V847.4 H2724.9 H2725.5 V842.1 H2726.1 H2726.9 V835.5 H2727.6 H2728.4 V828.9 H2729.2 H2729.9 V823.7 H2730.5 H2731.2 V818.4 H2731.9 H2732.5 V813.2 H2733.2 H2734.2 V806.6 H2735.1 H2736.1 V800.0 H2737.1 H2738.2 V793.9 H2739.3 H2740.4 V787.7 H2741.5 H2742.6 V781.6 H2743.7 H2744.8 V776.8 H2745.9 H2747.0 V771.9 H2748.1 H2749.2 V767.1 H2750.3 H2751.4 V761.8 H2752.5 H2753.6 V756.6 H2754.6 H2755.7 V751.3 H2756.8 H2757.9 V746.5 H2759.0 H2760.1 V741.6 H2761.2 H2762.3 V736.8 H2763.4 H2764.5 V732.0 H2765.6 H2766.7 V727.2 H2767.8 H2768.9 V722.4 H2770.0 H2771.3 V720.4 H2772.7 H2774.0 V718.4 H2775.3 L2781.1 718.1 V717.9 L2781.8 730.3 H2782.5 V740.1 H2783.2 H2783.8 V750.0 H2784.5 H2785.2 V759.9 H2785.8 H2786.4 V769.7 H2787.1 H2787.8 V775.9 H2788.4 H2789.1 V782.0 H2789.8 H2790.4 V788.2 H2791.1 H2791.8 V793.4 H2792.4 H2793.1 V798.7 H2793.7 H2794.3 V803.9 H2795.0 H2796.3 V808.5 H2797.7 H2799.0 V813.2 H2800.3 L2812.1 818.7 V821.6 L2822.5 824.3 V825.7 L2830.5 827.8 V828.9 L2843.1 832.7 V834.6 L2856.8 838.7 V840.8 L2871.7 844.7 V846.7 L2883.2 849.7 V851.3 L2897.3 855.0 V856.9 L2909.5 860.2 V861.8 L2921.9 865.1 V866.7 L2932.6 869.6 V871.0 L2943.5 873.9 V875.4 L2960.3 879.8 V882.1 L2967.1 883.9 V884.8 L2978.5 887.7 V889.2 L2990.6 892.2 V893.8 L3001.3 896.0 V897.2 L3014.2 899.9 V901.3 L3023.1 903.1 V904.1 L3023.8 849.5 H3025.4 V846.0 H3027.1 L3030.2 846.0 H3030.9 V840.7 H3031.6 H3032.3 V835.4 H3033.0 H3033.6 V829.9 H3034.2 H3034.8 V824.4 H3035.3 H3035.9 V818.9 H3036.5 H3037.1 V813.4 H3037.7 H3038.3 V807.9 H3038.9 H3039.5 V802.4 H3040.1 H3040.7 V796.9 H3041.3 H3041.8 V791.5 H3042.4 H3043.0 V786.0 H3043.6 H3044.2 V780.7 H3044.8 H3045.3 V775.4 H3045.9 H3046.8 V768.9 H3047.7 H3048.6 V762.4 H3049.5 H3050.1 V757.7 H3050.7 H3051.2 V753.0 H3051.8 H3052.4 V748.3 H3053.0 H3053.6 V743.6 H3054.2 H3054.8 V738.9 H3055.3 H3055.9 V734.2 H3056.5 H3057.1 V729.5 H3057.7 H3058.3 V724.8 H3058.9 H3059.5 V720.1 H3060.1 H3060.7 V715.4 H3061.3 H3061.8 V710.6 H3062.4 H3063.0 V705.9 H3063.6 H3064.4 V700.4 H3065.2 H3065.9 V695.0 H3066.7 H3067.5 V689.5 H3068.3 H3069.3 V684.8 H3070.3 H3071.2 V680.0 H3072.2 H3073.2 V675.3 H3074.2 H3075.4 V670.6 H3076.6 H3077.8 V665.9 H3078.9 H3080.1 V661.2 H3081.3 H3083.1 V656.5 H3084.8 H3086.6 V651.8 H3088.3 L3096.6 647.9 V645.9 L3106.0 643.9 V642.8 L3117.3 642.5 V642.4 L3118.2 658.9 H3119.0 V666.0 H3119.8 H3120.5 V673.0 H3121.3 H3121.9 V677.7 H3122.5 H3123.1 V682.4 H3123.6 H3124.2 V687.1 H3124.8 H3125.7 V692.4 H3126.6 H3127.4 V697.7 H3128.3 H3129.5 V703.0 H3130.7 H3131.8 V708.3 H3133.0 H3135.9 V716.5 H3138.9 H3140.5 V718.9 H3142.0 H3143.6 V721.2 H3145.2 H3146.7 V723.6 H3148.3 L3157.8 727.5 V729.5 L3168.9 734.4 V736.9 L3178.9 741.3 V743.6 L3190.5 749.0 V751.7 L3202.5 757.3 V760.1 L3212.1 763.9 V765.9 L3226.0 771.4 V774.2 L3239.7 779.6 V782.4 L3249.6 786.3 V788.3 L3263.4 793.8 V796.6 L3273.1 800.4 V802.4 L3285.7 807.1 V809.5 L3297.0 813.7 V815.8" stroke="#f2bb4b" stroke-width="2.5" fill="none" stroke-linejoin="round"/>
<path d="M316.9 836.1 L859.2 836.1" stroke="#fa725e" stroke-width="2.5" fill="none" stroke-linejoin="miter"/>
<path d="M868.2 836.1 L3019.6 836.1 L3019.6 727.0 L3297.0 727.0" stroke="#fa725e" stroke-width="2.5" fill="none" stroke-linejoin="miter"/>
<circle cx="1137" cy="1240.9" r="14" fill="#4a6fd6"/>
<text x="1157.3" y="1247.7" font-size="21.0" fill="#e1e1e1" text-anchor="start" font-weight="normal" textLength="289.8" lengthAdjust="spacingAndGlyphs" stroke="#e1e1e1" stroke-width="0.4">esp-bsblan Temp mesurée ECS</text>
<circle cx="1482" cy="1240.9" r="14" fill="#f2bb4b"/>
<text x="1502.8" y="1247.7" font-size="21.0" fill="#e1e1e1" text-anchor="start" font-weight="normal" textLength="297.7" lengthAdjust="spacingAndGlyphs" stroke="#e1e1e1" stroke-width="0.4">esp-bsblan Temp de départ PAC</text>
<circle cx="1836" cy="1240.9" r="14" fill="#fa725e"/>
<text x="1856.5" y="1247.7" font-size="21.0" fill="#e1e1e1" text-anchor="start" font-weight="normal" textLength="317.0" lengthAdjust="spacingAndGlyphs" stroke="#e1e1e1" stroke-width="0.4">esp-bsblan Consigne actuelle ECS</text>
<rect x="307.5" y="1338.4" width="2987.5" height="1.8" fill="rgba(255,255,255,0.105)"/>
<text x="307.2" y="1343.8" font-size="21.0" fill="#e1e1e1" text-anchor="end" font-weight="normal" textLength="51.6" lengthAdjust="spacingAndGlyphs" stroke="#e1e1e1" stroke-width="0.4">233,5</text>
<rect x="307.5" y="1406.7" width="2987.5" height="1.8" fill="rgba(255,255,255,0.105)"/>
<text x="307.2" y="1411.9" font-size="21.0" fill="#e1e1e1" text-anchor="end" font-weight="normal" textLength="35.2" lengthAdjust="spacingAndGlyphs" stroke="#e1e1e1" stroke-width="0.4">233</text>
<rect x="307.5" y="1475.0" width="2987.5" height="1.8" fill="rgba(255,255,255,0.105)"/>
<text x="307.2" y="1480.1" font-size="21.0" fill="#e1e1e1" text-anchor="end" font-weight="normal" textLength="51.6" lengthAdjust="spacingAndGlyphs" stroke="#e1e1e1" stroke-width="0.4">232,5</text>
<rect x="307.5" y="1543.3" width="2987.5" height="1.8" fill="rgba(255,255,255,0.105)"/>
<text x="307.2" y="1548.2" font-size="21.0" fill="#e1e1e1" text-anchor="end" font-weight="normal" textLength="35.2" lengthAdjust="spacingAndGlyphs" stroke="#e1e1e1" stroke-width="0.4">232</text>
<rect x="307.5" y="1611.5" width="2987.5" height="1.8" fill="rgba(255,255,255,0.105)"/>
<text x="307.2" y="1616.4" font-size="21.0" fill="#e1e1e1" text-anchor="end" font-weight="normal" textLength="51.6" lengthAdjust="spacingAndGlyphs" stroke="#e1e1e1" stroke-width="0.4">231,5</text>
<rect x="307.5" y="1679.8" width="2987.5" height="1.8" fill="rgba(255,255,255,0.105)"/>
<text x="307.2" y="1684.5" font-size="21.0" fill="#e1e1e1" text-anchor="end" font-weight="normal" textLength="35.2" lengthAdjust="spacingAndGlyphs" stroke="#e1e1e1" stroke-width="0.4">231</text>
<rect x="307.5" y="1748.1" width="2987.5" height="1.8" fill="rgba(255,255,255,0.105)"/>
<text x="307.2" y="1752.6" font-size="21.0" fill="#e1e1e1" text-anchor="end" font-weight="normal" textLength="51.6" lengthAdjust="spacingAndGlyphs" stroke="#e1e1e1" stroke-width="0.4">230,5</text>
<rect x="307.5" y="1816.3" width="2987.5" height="1.8" fill="rgba(255,255,255,0.105)"/>
<text x="307.2" y="1820.8" font-size="21.0" fill="#e1e1e1" text-anchor="end" font-weight="normal" textLength="35.2" lengthAdjust="spacingAndGlyphs" stroke="#e1e1e1" stroke-width="0.4">230</text>
<rect x="316.0" y="1338.4" width="1.8" height="509.7" fill="rgba(255,255,255,0.175)"/>
<rect x="583.6" y="1338.4" width="1.8" height="509.7" fill="rgba(255,255,255,0.105)"/>
<rect x="853.2" y="1338.4" width="1.8" height="509.7" fill="rgba(255,255,255,0.105)"/>
<rect x="1121.5" y="1338.4" width="1.8" height="509.7" fill="rgba(255,255,255,0.105)"/>
<rect x="1390.3" y="1338.4" width="1.8" height="509.7" fill="rgba(255,255,255,0.105)"/>
<rect x="1658.6" y="1338.4" width="1.8" height="509.7" fill="rgba(255,255,255,0.105)"/>
<rect x="1927.8" y="1338.4" width="1.8" height="509.7" fill="rgba(255,255,255,0.105)"/>
<rect x="2196.6" y="1338.4" width="1.8" height="509.7" fill="rgba(255,255,255,0.105)"/>
<rect x="2465.4" y="1338.4" width="1.8" height="509.7" fill="rgba(255,255,255,0.105)"/>
<rect x="2735.0" y="1338.4" width="1.8" height="509.7" fill="rgba(255,255,255,0.105)"/>
<rect x="3003.0" y="1338.4" width="1.8" height="509.7" fill="rgba(255,255,255,0.105)"/>
<rect x="3272.4" y="1338.4" width="1.8" height="509.7" fill="rgba(255,255,255,0.105)"/>
<text x="316.0" y="1322.8" font-size="21.0" fill="#e1e1e1" text-anchor="start" font-weight="normal" textLength="40.6" lengthAdjust="spacingAndGlyphs" stroke="#e1e1e1" stroke-width="0.4">kWh</text>
<path d="M316.3 1846.6 L900.0 1845.4 L1613.6 1842.0 H1619.2 V1838.4 H1623.8 V1834.9 H1627.8 V1829.8 H1632.9 V1823.7 H1637.5 V1816.0 H1641.6 V1807.9 H1646.2 V1798.7 H1650.7 V1789.6 H1655.3 V1779.9 H1659.9 V1770.4 H1664.5 V1761.6 H1668.5 V1752.9 H1673.1 V1744.8 H1677.4 V1741.4 L1702.0 1740.2 L2200.0 1738.0 L2689.5 1736.4 H2694.2 V1731.0 H2699.0 V1727.5 H2703.3 V1723.5 H2708.2 V1716.3 H2712.9 V1708.0 H2717.3 V1698.0 H2721.8 V1687.6 H2725.9 V1676.2 H2730.1 V1665.4 H2734.5 V1654.2 H2739.3 V1643.4 H2743.6 V1632.7 H2748.1 V1622.0 H2752.7 V1611.5 H2757.1 V1600.9 H2761.6 V1590.2 H2765.9 V1579.7 H2770.4 V1569.0 H2775.0 V1559.9 H2780.5 V1553.9 L2800.0 1552.6 L3029.5 1551.2 H3030.3 V1548.0 H3034.7 V1543.6 H3039.2 V1538.8 H3043.5 V1532.7 H3048.2 V1525.3 H3052.5 V1517.3 H3057.0 V1507.7 H3061.5 V1497.9 H3065.9 V1488.2 H3070.4 V1483.4 H3074.8 V1471.9 H3079.3 V1461.2 H3084.1 V1451.2 H3088.1 V1440.9 H3092.7 V1431.0 H3097.1 V1422.2 H3101.6 V1413.8 H3106.4 V1410.1 H3111.1 V1402.6 H3115.0 V1395.8 L3135.0 1395.0 L3297.0 1394.4" stroke="#06090b" stroke-width="4.7" fill="none" stroke-linejoin="miter"/>
<path d="M316.3 1846.6 L900.0 1845.4 L1613.6 1842.0 H1619.2 V1838.4 H1623.8 V1834.9 H1627.8 V1829.8 H1632.9 V1823.7 H1637.5 V1816.0 H1641.6 V1807.9 H1646.2 V1798.7 H1650.7 V1789.6 H1655.3 V1779.9 H1659.9 V1770.4 H1664.5 V1761.6 H1668.5 V1752.9 H1673.1 V1744.8 H1677.4 V1741.4 L1702.0 1740.2 L2200.0 1738.0 L2689.5 1736.4 H2694.2 V1731.0 H2699.0 V1727.5 H2703.3 V1723.5 H2708.2 V1716.3 H2712.9 V1708.0 H2717.3 V1698.0 H2721.8 V1687.6 H2725.9 V1676.2 H2730.1 V1665.4 H2734.5 V1654.2 H2739.3 V1643.4 H2743.6 V1632.7 H2748.1 V1622.0 H2752.7 V1611.5 H2757.1 V1600.9 H2761.6 V1590.2 H2765.9 V1579.7 H2770.4 V1569.0 H2775.0 V1559.9 H2780.5 V1553.9 L2800.0 1552.6 L3029.5 1551.2 H3030.3 V1548.0 H3034.7 V1543.6 H3039.2 V1538.8 H3043.5 V1532.7 H3048.2 V1525.3 H3052.5 V1517.3 H3057.0 V1507.7 H3061.5 V1497.9 H3065.9 V1488.2 H3070.4 V1483.4 H3074.8 V1471.9 H3079.3 V1461.2 H3084.1 V1451.2 H3088.1 V1440.9 H3092.7 V1431.0 H3097.1 V1422.2 H3101.6 V1413.8 H3106.4 V1410.1 H3111.1 V1402.6 H3115.0 V1395.8 L3135.0 1395.0 L3297.0 1394.4" stroke="#4a6fd6" stroke-width="2.5" fill="none" stroke-linejoin="miter"/>
<g fill="#000" stroke="#000" stroke-width="2.6" stroke-linejoin="round"><rect x="3126.8" y="1786.2" width="3.0" height="11" rx="1.2"/><rect x="3132.9" y="1785.2" width="3.1" height="12" rx="1.2"/><rect x="3137.5" y="1786.2" width="2.8" height="11" rx="1.2"/><rect x="3142.3" y="1791.0" width="2.6" height="9" rx="1.1"/><path d="M3126.8 1795.3 H3144.9 V1799.5 L3142.4 1803.2 L3139.4 1808.8 H3128.6 V1805 L3121.3 1799.9 L3121 1798 L3122.6 1797 L3126.8 1799.6 Z"/></g>
<g fill="#f1f5fb"><rect x="3126.8" y="1786.2" width="3.0" height="11" rx="1.2"/><rect x="3132.9" y="1785.2" width="3.1" height="12" rx="1.2"/><rect x="3137.5" y="1786.2" width="2.8" height="11" rx="1.2"/><rect x="3142.3" y="1791.0" width="2.6" height="9" rx="1.1"/><path d="M3126.8 1795.3 H3144.9 V1799.5 L3142.4 1803.2 L3139.4 1808.8 H3128.6 V1805 L3121.3 1799.9 L3121 1798 L3122.6 1797 L3126.8 1799.6 Z"/></g>
<rect x="3130.4" y="1787.5" width="1.9" height="7" fill="#3a3a3a"/>
</svg></body></html>
